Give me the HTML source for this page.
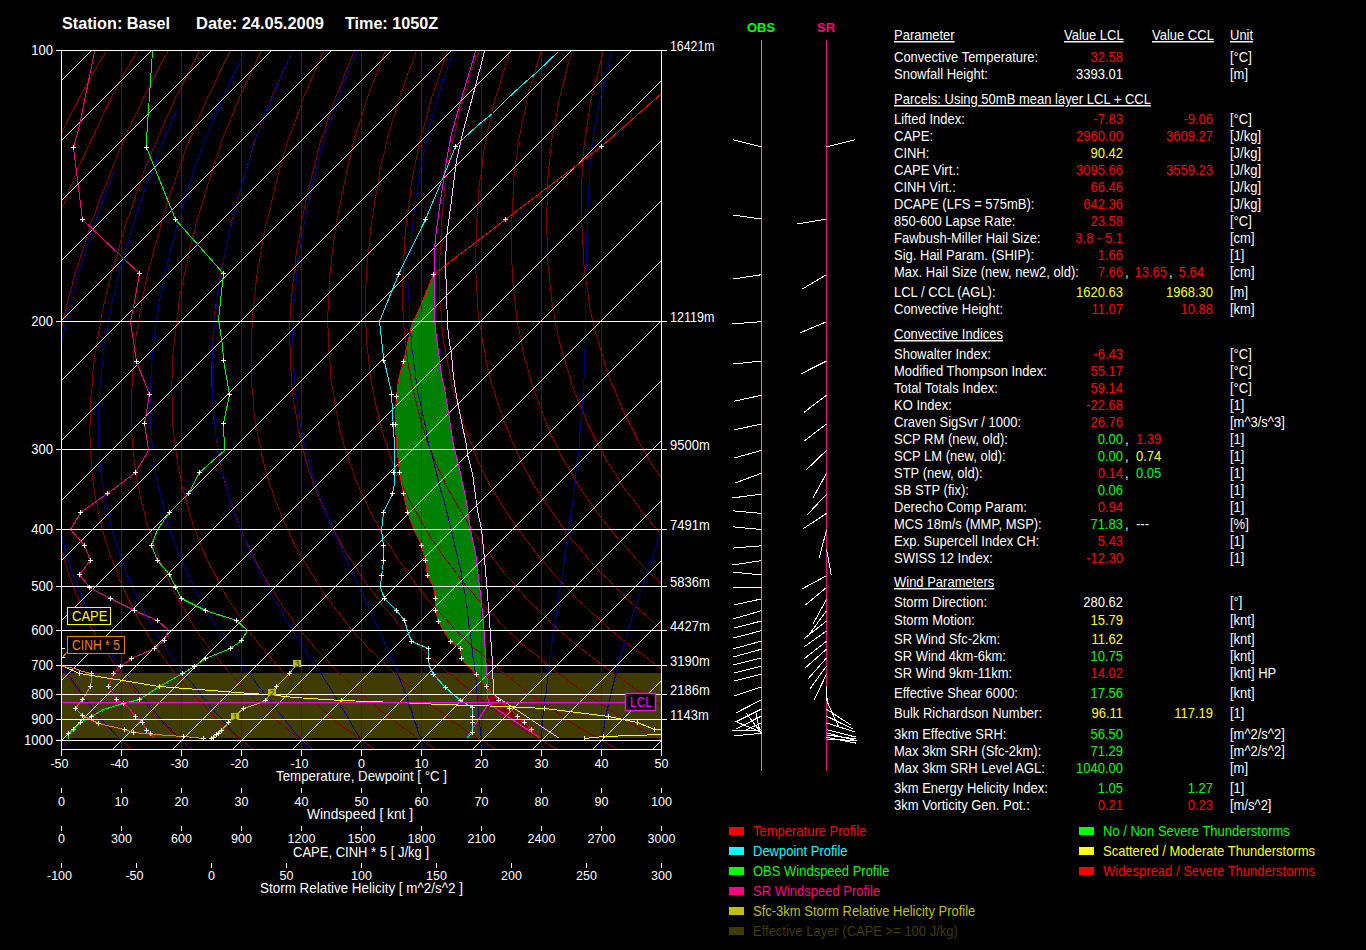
<!DOCTYPE html>
<html><head><meta charset="utf-8"><style>
html,body{margin:0;padding:0;background:#000;width:1366px;height:950px;overflow:hidden}
svg{display:block}
text{font-family:"Liberation Sans",sans-serif}
</style></head><body>
<svg width="1366" height="950" viewBox="0 0 1366 950">
<rect width="1366" height="950" fill="#000"/>
<defs><clipPath id="cp"><rect x="62" y="51" width="599" height="698"/></clipPath></defs>
<g clip-path="url(#cp)" shape-rendering="crispEdges">
<rect x="62" y="673" width="599" height="65" fill="#403c00"/>
<polygon points="433.5,274.5 416.5,315.5 412.5,321.5 407.5,343.5 403.9,361.5 399.0,379.5 396.2,396.5 395.3,412.5 395.3,424.5 396.2,445.5 398.3,461.5 399.8,472.5 403.9,493.5 407.5,512.5 415.0,530.9 421.3,545.5 425.4,560.5 427.5,575.5 433.1,586.4 435.9,598.5 435.9,610.5 438.0,621.1 443.5,630.9 450.5,641.5 460.9,648.5 461.6,658.0 467.9,665.6 476.9,674.0 486.6,686.5 492.5,693.5 487.5,693.5 487.3,685.1 485.9,655.9 483.2,621.1 480.4,593.3 477.6,570.5 476.2,558.7 470.6,529.5 465.1,496.1 458.1,464.1 453.9,445.5 449.1,419.8 446.3,400.3 443.5,383.6 441.4,376.7 438.7,351.7 435.9,329.4 434.8,315.5 434.8,278.9" fill="#008000" stroke="none"/>
<polygon points="492.5,693.5 498.0,700.2 509.5,709.0 517.3,716.2 524.5,722.8 531.1,729.5 540.5,738.5 540.5,738.5 488.0,703.5 487.5,693.5" fill="#800000" stroke="none"/>
<rect x="121" y="50" width="1" height="700" fill="#004000"/>
<rect x="181" y="50" width="1" height="700" fill="#004000"/>
<rect x="241" y="50" width="1" height="700" fill="#004000"/>
<rect x="301" y="50" width="1" height="700" fill="#004000"/>
<rect x="361" y="50" width="1" height="700" fill="#004000"/>
<rect x="421" y="50" width="1" height="700" fill="#004000"/>
<rect x="481" y="50" width="1" height="700" fill="#004000"/>
<rect x="541" y="50" width="1" height="700" fill="#004000"/>
<rect x="601" y="50" width="1" height="700" fill="#004000"/>
<polyline points="106.5,50.5 99.5,62.5 92.5,74.5 85.5,86.5 79.5,97.5 73.5,109.5 67.5,120.5 62.5,131.5 57.5,141.5 52.5,152.5 47.5,162.5 42.5,172.5 38.5,182.5 34.5,192.5 29.5,202.5 25.5,212.5 21.5,221.5 18.5,231.5 14.5,241.5 10.5,250.5 7.5,260.5 3.5,269.5 0.5,278.5 -2.5,288.5 -5.5,297.5 -8.5,306.5 -11.5,315.5 -13.5,323.5 -16.5,332.5 -18.5,341.5 -20.5,349.5 -22.5,358.5 -24.5,366.5 -26.5,375.5 -27.5,383.5 -29.5,391.5 -30.5,399.5 -32.5,407.5 -33.5,415.5 -34.5,423.5 -35.5,431.5 -36.5,439.5 -36.5,446.5 -37.5,454.5 -37.5,462.5 -38.5,469.5 -38.5,476.5 -38.5,484.5 -38.5,491.5 -38.5,498.5 -37.5,505.5 -37.5,512.5 -36.5,519.5 -36.5,526.5 -35.5,533.5 -34.5,540.5 -33.5,546.5 -32.5,553.5 -31.5,560.5 -29.5,566.5 -28.5,573.5 -26.5,579.5 -25.5,586.5 -23.5,592.5 -21.5,599.5 -19.5,605.5 -17.5,611.5 -15.5,617.5 -12.5,624.5 -10.5,630.5 -7.5,636.5 -5.5,642.5 -2.5,648.5 0.5,653.5 3.5,659.5 6.5,665.5 10.5,671.5 13.5,676.5 16.5,682.5 20.5,688.5 24.5,693.5 27.5,699.5 31.5,704.5 35.5,710.5 39.5,715.5 44.5,721.5 48.5,726.5 53.5,731.5 57.5,736.5 62.5,741.5 67.5,746.5 72.5,751.5" fill="none" stroke="#800000" stroke-width="1"/>
<polyline points="137.5,50.5 130.5,62.5 123.5,74.5 117.5,86.5 111.5,97.5 105.5,109.5 100.5,120.5 95.5,131.5 90.5,141.5 85.5,152.5 80.5,162.5 76.5,172.5 72.5,182.5 68.5,192.5 64.5,202.5 60.5,212.5 56.5,221.5 53.5,231.5 49.5,241.5 46.5,250.5 43.5,260.5 40.5,269.5 37.5,278.5 34.5,288.5 31.5,297.5 28.5,306.5 26.5,315.5 24.5,323.5 22.5,332.5 20.5,341.5 18.5,349.5 16.5,358.5 14.5,366.5 13.5,375.5 12.5,383.5 10.5,391.5 9.5,399.5 8.5,407.5 7.5,415.5 7.5,423.5 6.5,431.5 5.5,439.5 5.5,446.5 5.5,454.5 5.5,462.5 5.5,469.5 5.5,476.5 5.5,484.5 5.5,491.5 6.5,498.5 7.5,505.5 7.5,512.5 8.5,519.5 9.5,526.5 10.5,533.5 12.5,540.5 13.5,546.5 15.5,553.5 16.5,560.5 18.5,566.5 20.5,573.5 22.5,579.5 24.5,586.5 26.5,592.5 28.5,599.5 30.5,605.5 33.5,611.5 35.5,617.5 38.5,624.5 41.5,630.5 44.5,636.5 47.5,642.5 50.5,648.5 53.5,653.5 57.5,659.5 60.5,665.5 64.5,671.5 68.5,676.5 72.5,682.5 76.5,688.5 80.5,693.5 84.5,699.5 88.5,704.5 93.5,710.5 97.5,715.5 102.5,721.5 107.5,726.5 112.5,731.5 117.5,736.5 122.5,741.5 128.5,746.5 133.5,751.5" fill="none" stroke="#800000" stroke-width="1"/>
<polyline points="168.5,50.5 161.5,62.5 155.5,74.5 149.5,86.5 143.5,97.5 138.5,109.5 132.5,120.5 127.5,131.5 123.5,141.5 118.5,152.5 114.5,162.5 110.5,172.5 106.5,182.5 102.5,192.5 98.5,202.5 95.5,212.5 91.5,221.5 88.5,231.5 85.5,241.5 82.5,250.5 79.5,260.5 76.5,269.5 73.5,278.5 71.5,288.5 68.5,297.5 66.5,306.5 64.5,315.5 62.5,323.5 60.5,332.5 58.5,341.5 57.5,349.5 55.5,358.5 54.5,366.5 53.5,375.5 52.5,383.5 51.5,391.5 50.5,399.5 49.5,407.5 48.5,415.5 48.5,423.5 48.5,431.5 47.5,439.5 47.5,446.5 47.5,454.5 48.5,462.5 48.5,469.5 48.5,476.5 49.5,484.5 50.5,491.5 51.5,498.5 52.5,505.5 53.5,512.5 54.5,519.5 55.5,526.5 57.5,533.5 58.5,540.5 60.5,546.5 62.5,553.5 64.5,560.5 66.5,566.5 68.5,573.5 70.5,579.5 73.5,586.5 75.5,592.5 78.5,599.5 81.5,605.5 83.5,611.5 86.5,617.5 89.5,624.5 93.5,630.5 96.5,636.5 99.5,642.5 103.5,648.5 107.5,653.5 111.5,659.5 115.5,665.5 119.5,671.5 123.5,676.5 127.5,682.5 132.5,688.5 136.5,693.5 141.5,699.5 145.5,704.5 150.5,710.5 155.5,715.5 160.5,721.5 166.5,726.5 171.5,731.5 177.5,736.5 182.5,741.5 188.5,746.5 194.5,751.5" fill="none" stroke="#800000" stroke-width="1"/>
<polyline points="199.5,50.5 193.5,62.5 187.5,74.5 181.5,86.5 175.5,97.5 170.5,109.5 165.5,120.5 160.5,131.5 156.5,141.5 151.5,152.5 147.5,162.5 143.5,172.5 140.5,182.5 136.5,192.5 133.5,202.5 130.5,212.5 126.5,221.5 123.5,231.5 120.5,241.5 118.5,250.5 115.5,260.5 112.5,269.5 110.5,278.5 107.5,288.5 105.5,297.5 103.5,306.5 101.5,315.5 100.5,323.5 98.5,332.5 97.5,341.5 95.5,349.5 94.5,358.5 93.5,366.5 92.5,375.5 92.5,383.5 91.5,391.5 90.5,399.5 90.5,407.5 90.5,415.5 90.5,423.5 89.5,431.5 90.5,439.5 90.5,446.5 90.5,454.5 91.5,462.5 91.5,469.5 92.5,476.5 93.5,484.5 94.5,491.5 95.5,498.5 97.5,505.5 98.5,512.5 100.5,519.5 101.5,526.5 103.5,533.5 105.5,540.5 107.5,546.5 109.5,553.5 112.5,560.5 114.5,566.5 117.5,573.5 119.5,579.5 122.5,586.5 125.5,592.5 128.5,599.5 131.5,605.5 134.5,611.5 137.5,617.5 141.5,624.5 145.5,630.5 148.5,636.5 152.5,642.5 156.5,648.5 160.5,653.5 164.5,659.5 169.5,665.5 173.5,671.5 178.5,676.5 183.5,682.5 187.5,688.5 192.5,693.5 197.5,699.5 203.5,704.5 208.5,710.5 213.5,715.5 219.5,721.5 224.5,726.5 230.5,731.5 236.5,736.5 243.5,741.5 249.5,746.5 255.5,751.5" fill="none" stroke="#800000" stroke-width="1"/>
<polyline points="230.5,50.5 224.5,62.5 218.5,74.5 213.5,86.5 207.5,97.5 202.5,109.5 197.5,120.5 193.5,131.5 188.5,141.5 184.5,152.5 181.5,162.5 177.5,172.5 174.5,182.5 170.5,192.5 167.5,202.5 164.5,212.5 161.5,221.5 159.5,231.5 156.5,241.5 153.5,250.5 151.5,260.5 148.5,269.5 146.5,278.5 144.5,288.5 142.5,297.5 141.5,306.5 139.5,315.5 138.5,323.5 136.5,332.5 135.5,341.5 134.5,349.5 133.5,358.5 133.5,366.5 132.5,375.5 132.5,383.5 131.5,391.5 131.5,399.5 131.5,407.5 131.5,415.5 131.5,423.5 131.5,431.5 132.5,439.5 132.5,446.5 133.5,454.5 134.5,462.5 135.5,469.5 136.5,476.5 137.5,484.5 139.5,491.5 140.5,498.5 142.5,505.5 144.5,512.5 145.5,519.5 147.5,526.5 150.5,533.5 152.5,540.5 154.5,546.5 157.5,553.5 159.5,560.5 162.5,566.5 165.5,573.5 168.5,579.5 171.5,586.5 174.5,592.5 178.5,599.5 181.5,605.5 185.5,611.5 189.5,617.5 192.5,624.5 196.5,630.5 200.5,636.5 205.5,642.5 209.5,648.5 214.5,653.5 218.5,659.5 223.5,665.5 228.5,671.5 233.5,676.5 238.5,682.5 243.5,688.5 249.5,693.5 254.5,699.5 260.5,704.5 265.5,710.5 271.5,715.5 277.5,721.5 283.5,726.5 290.5,731.5 296.5,736.5 303.5,741.5 309.5,746.5 316.5,751.5" fill="none" stroke="#800000" stroke-width="1"/>
<polyline points="261.5,50.5 255.5,62.5 250.5,74.5 244.5,86.5 239.5,97.5 234.5,109.5 230.5,120.5 225.5,131.5 221.5,141.5 218.5,152.5 214.5,162.5 211.5,172.5 208.5,182.5 205.5,192.5 202.5,202.5 199.5,212.5 196.5,221.5 194.5,231.5 191.5,241.5 189.5,250.5 187.5,260.5 185.5,269.5 183.5,278.5 181.5,288.5 179.5,297.5 178.5,306.5 177.5,315.5 176.5,323.5 175.5,332.5 174.5,341.5 173.5,349.5 172.5,358.5 172.5,366.5 172.5,375.5 171.5,383.5 171.5,391.5 172.5,399.5 172.5,407.5 172.5,415.5 172.5,423.5 173.5,431.5 174.5,439.5 175.5,446.5 176.5,454.5 177.5,462.5 178.5,469.5 180.5,476.5 181.5,484.5 183.5,491.5 185.5,498.5 187.5,505.5 189.5,512.5 191.5,519.5 193.5,526.5 196.5,533.5 199.5,540.5 201.5,546.5 204.5,553.5 207.5,560.5 210.5,566.5 214.5,573.5 217.5,579.5 220.5,586.5 224.5,592.5 228.5,599.5 232.5,605.5 236.5,611.5 240.5,617.5 244.5,624.5 248.5,630.5 253.5,636.5 257.5,642.5 262.5,648.5 267.5,653.5 272.5,659.5 277.5,665.5 282.5,671.5 288.5,676.5 293.5,682.5 299.5,688.5 305.5,693.5 311.5,699.5 317.5,704.5 323.5,710.5 329.5,715.5 335.5,721.5 342.5,726.5 349.5,731.5 356.5,736.5 363.5,741.5 370.5,746.5 377.5,751.5" fill="none" stroke="#800000" stroke-width="1"/>
<polyline points="292.5,50.5 287.5,62.5 281.5,74.5 276.5,86.5 271.5,97.5 267.5,109.5 262.5,120.5 258.5,131.5 254.5,141.5 251.5,152.5 248.5,162.5 245.5,172.5 242.5,182.5 239.5,192.5 236.5,202.5 234.5,212.5 231.5,221.5 229.5,231.5 227.5,241.5 225.5,250.5 223.5,260.5 221.5,269.5 219.5,278.5 218.5,288.5 217.5,297.5 215.5,306.5 214.5,315.5 214.5,323.5 213.5,332.5 212.5,341.5 212.5,349.5 212.5,358.5 211.5,366.5 211.5,375.5 211.5,383.5 212.5,391.5 212.5,399.5 213.5,407.5 213.5,415.5 214.5,423.5 215.5,431.5 216.5,439.5 217.5,446.5 218.5,454.5 220.5,462.5 221.5,469.5 223.5,476.5 225.5,484.5 227.5,491.5 229.5,498.5 232.5,505.5 234.5,512.5 237.5,519.5 239.5,526.5 242.5,533.5 245.5,540.5 248.5,546.5 252.5,553.5 255.5,560.5 258.5,566.5 262.5,573.5 266.5,579.5 270.5,586.5 274.5,592.5 278.5,599.5 282.5,605.5 286.5,611.5 291.5,617.5 295.5,624.5 300.5,630.5 305.5,636.5 310.5,642.5 315.5,648.5 320.5,653.5 326.5,659.5 331.5,665.5 337.5,671.5 343.5,676.5 349.5,682.5 355.5,688.5 361.5,693.5 367.5,699.5 374.5,704.5 380.5,710.5 387.5,715.5 394.5,721.5 401.5,726.5 408.5,731.5 415.5,736.5 423.5,741.5 431.5,746.5 438.5,751.5" fill="none" stroke="#800000" stroke-width="1"/>
<polyline points="323.5,50.5 318.5,62.5 313.5,74.5 308.5,86.5 303.5,97.5 299.5,109.5 295.5,120.5 291.5,131.5 287.5,141.5 284.5,152.5 281.5,162.5 278.5,172.5 276.5,182.5 273.5,192.5 271.5,202.5 269.5,212.5 266.5,221.5 264.5,231.5 262.5,241.5 261.5,250.5 259.5,260.5 257.5,269.5 256.5,278.5 255.5,288.5 254.5,297.5 253.5,306.5 252.5,315.5 252.5,323.5 251.5,332.5 251.5,341.5 251.5,349.5 251.5,358.5 251.5,366.5 251.5,375.5 251.5,383.5 252.5,391.5 253.5,399.5 253.5,407.5 254.5,415.5 255.5,423.5 257.5,431.5 258.5,439.5 260.5,446.5 261.5,454.5 263.5,462.5 265.5,469.5 267.5,476.5 269.5,484.5 272.5,491.5 274.5,498.5 277.5,505.5 280.5,512.5 282.5,519.5 286.5,526.5 289.5,533.5 292.5,540.5 295.5,546.5 299.5,553.5 303.5,560.5 307.5,566.5 311.5,573.5 315.5,579.5 319.5,586.5 323.5,592.5 328.5,599.5 332.5,605.5 337.5,611.5 342.5,617.5 347.5,624.5 352.5,630.5 357.5,636.5 363.5,642.5 368.5,648.5 374.5,653.5 380.5,659.5 386.5,665.5 392.5,671.5 398.5,676.5 404.5,682.5 411.5,688.5 417.5,693.5 424.5,699.5 431.5,704.5 438.5,710.5 445.5,715.5 452.5,721.5 460.5,726.5 467.5,731.5 475.5,736.5 483.5,741.5 491.5,746.5 499.5,751.5" fill="none" stroke="#800000" stroke-width="1"/>
<polyline points="354.5,50.5 349.5,62.5 344.5,74.5 340.5,86.5 335.5,97.5 331.5,109.5 327.5,120.5 324.5,131.5 320.5,141.5 317.5,152.5 315.5,162.5 312.5,172.5 310.5,182.5 307.5,192.5 305.5,202.5 303.5,212.5 301.5,221.5 300.5,231.5 298.5,241.5 296.5,250.5 295.5,260.5 294.5,269.5 293.5,278.5 292.5,288.5 291.5,297.5 290.5,306.5 290.5,315.5 289.5,323.5 289.5,332.5 289.5,341.5 290.5,349.5 290.5,358.5 290.5,366.5 291.5,375.5 291.5,383.5 292.5,391.5 293.5,399.5 294.5,407.5 296.5,415.5 297.5,423.5 298.5,431.5 300.5,439.5 302.5,446.5 304.5,454.5 306.5,462.5 308.5,469.5 311.5,476.5 313.5,484.5 316.5,491.5 319.5,498.5 322.5,505.5 325.5,512.5 328.5,519.5 332.5,526.5 335.5,533.5 339.5,540.5 342.5,546.5 346.5,553.5 351.5,560.5 355.5,566.5 359.5,573.5 363.5,579.5 368.5,586.5 373.5,592.5 378.5,599.5 382.5,605.5 388.5,611.5 393.5,617.5 398.5,624.5 404.5,630.5 409.5,636.5 415.5,642.5 421.5,648.5 427.5,653.5 433.5,659.5 440.5,665.5 446.5,671.5 453.5,676.5 460.5,682.5 467.5,688.5 474.5,693.5 481.5,699.5 488.5,704.5 495.5,710.5 503.5,715.5 510.5,721.5 518.5,726.5 526.5,731.5 535.5,736.5 543.5,741.5 552.5,746.5 560.5,751.5" fill="none" stroke="#800000" stroke-width="1"/>
<polyline points="385.5,50.5 380.5,62.5 376.5,74.5 371.5,86.5 367.5,97.5 363.5,109.5 360.5,120.5 356.5,131.5 353.5,141.5 351.5,152.5 348.5,162.5 346.5,172.5 344.5,182.5 342.5,192.5 340.5,202.5 338.5,212.5 336.5,221.5 335.5,231.5 333.5,241.5 332.5,250.5 331.5,260.5 330.5,269.5 329.5,278.5 329.5,288.5 328.5,297.5 328.5,306.5 327.5,315.5 327.5,323.5 328.5,332.5 328.5,341.5 328.5,349.5 329.5,358.5 330.5,366.5 330.5,375.5 331.5,383.5 333.5,391.5 334.5,399.5 335.5,407.5 337.5,415.5 338.5,423.5 340.5,431.5 342.5,439.5 344.5,446.5 347.5,454.5 349.5,462.5 352.5,469.5 354.5,476.5 357.5,484.5 360.5,491.5 364.5,498.5 367.5,505.5 370.5,512.5 374.5,519.5 378.5,526.5 381.5,533.5 385.5,540.5 390.5,546.5 394.5,553.5 398.5,560.5 403.5,566.5 408.5,573.5 412.5,579.5 417.5,586.5 422.5,592.5 427.5,599.5 433.5,605.5 438.5,611.5 444.5,617.5 450.5,624.5 455.5,630.5 462.5,636.5 468.5,642.5 474.5,648.5 481.5,653.5 487.5,659.5 494.5,665.5 501.5,671.5 508.5,676.5 515.5,682.5 522.5,688.5 530.5,693.5 537.5,699.5 545.5,704.5 553.5,710.5 561.5,715.5 569.5,721.5 577.5,726.5 586.5,731.5 594.5,736.5 603.5,741.5 612.5,746.5 621.5,751.5" fill="none" stroke="#800000" stroke-width="1"/>
<polyline points="416.5,50.5 412.5,62.5 407.5,74.5 403.5,86.5 399.5,97.5 396.5,109.5 392.5,120.5 389.5,131.5 386.5,141.5 384.5,152.5 381.5,162.5 379.5,172.5 378.5,182.5 376.5,192.5 374.5,202.5 373.5,212.5 371.5,221.5 370.5,231.5 369.5,241.5 368.5,250.5 367.5,260.5 366.5,269.5 366.5,278.5 365.5,288.5 365.5,297.5 365.5,306.5 365.5,315.5 365.5,323.5 366.5,332.5 366.5,341.5 367.5,349.5 368.5,358.5 369.5,366.5 370.5,375.5 371.5,383.5 373.5,391.5 374.5,399.5 376.5,407.5 378.5,415.5 380.5,423.5 382.5,431.5 384.5,439.5 387.5,446.5 389.5,454.5 392.5,462.5 395.5,469.5 398.5,476.5 401.5,484.5 405.5,491.5 408.5,498.5 412.5,505.5 416.5,512.5 420.5,519.5 424.5,526.5 428.5,533.5 432.5,540.5 437.5,546.5 441.5,553.5 446.5,560.5 451.5,566.5 456.5,573.5 461.5,579.5 466.5,586.5 472.5,592.5 477.5,599.5 483.5,605.5 489.5,611.5 495.5,617.5 501.5,624.5 507.5,630.5 514.5,636.5 520.5,642.5 527.5,648.5 534.5,653.5 541.5,659.5 548.5,665.5 555.5,671.5 563.5,676.5 570.5,682.5 578.5,688.5 586.5,693.5 594.5,699.5 602.5,704.5 610.5,710.5 619.5,715.5 627.5,721.5 636.5,726.5 645.5,731.5 654.5,736.5 663.5,741.5 673.5,746.5 682.5,751.5" fill="none" stroke="#800000" stroke-width="1"/>
<polyline points="447.5,50.5 443.5,62.5 439.5,74.5 435.5,86.5 431.5,97.5 428.5,109.5 425.5,120.5 422.5,131.5 419.5,141.5 417.5,152.5 415.5,162.5 413.5,172.5 411.5,182.5 410.5,192.5 409.5,202.5 407.5,212.5 406.5,221.5 405.5,231.5 404.5,241.5 404.5,250.5 403.5,260.5 403.5,269.5 402.5,278.5 402.5,288.5 402.5,297.5 402.5,306.5 403.5,315.5 403.5,323.5 404.5,332.5 405.5,341.5 406.5,349.5 407.5,358.5 408.5,366.5 410.5,375.5 411.5,383.5 413.5,391.5 415.5,399.5 417.5,407.5 419.5,415.5 421.5,423.5 424.5,431.5 426.5,439.5 429.5,446.5 432.5,454.5 435.5,462.5 438.5,469.5 442.5,476.5 445.5,484.5 449.5,491.5 453.5,498.5 457.5,505.5 461.5,512.5 465.5,519.5 470.5,526.5 474.5,533.5 479.5,540.5 484.5,546.5 489.5,553.5 494.5,560.5 499.5,566.5 504.5,573.5 510.5,579.5 516.5,586.5 521.5,592.5 527.5,599.5 533.5,605.5 540.5,611.5 546.5,617.5 552.5,624.5 559.5,630.5 566.5,636.5 573.5,642.5 580.5,648.5 587.5,653.5 595.5,659.5 602.5,665.5 610.5,671.5 618.5,676.5 626.5,682.5 634.5,688.5 642.5,693.5 651.5,699.5 659.5,704.5 668.5,710.5 677.5,715.5 686.5,721.5 695.5,726.5 704.5,731.5 714.5,736.5 723.5,741.5 733.5,746.5 743.5,751.5" fill="none" stroke="#800000" stroke-width="1"/>
<polyline points="479.5,50.5 474.5,62.5 470.5,74.5 467.5,86.5 463.5,97.5 460.5,109.5 457.5,120.5 455.5,131.5 452.5,141.5 450.5,152.5 448.5,162.5 447.5,172.5 445.5,182.5 444.5,192.5 443.5,202.5 442.5,212.5 441.5,221.5 441.5,231.5 440.5,241.5 440.5,250.5 439.5,260.5 439.5,269.5 439.5,278.5 439.5,288.5 439.5,297.5 440.5,306.5 441.5,315.5 441.5,323.5 442.5,332.5 443.5,341.5 445.5,349.5 446.5,358.5 448.5,366.5 450.5,375.5 451.5,383.5 453.5,391.5 456.5,399.5 458.5,407.5 460.5,415.5 463.5,423.5 466.5,431.5 469.5,439.5 472.5,446.5 475.5,454.5 478.5,462.5 482.5,469.5 485.5,476.5 489.5,484.5 493.5,491.5 498.5,498.5 502.5,505.5 506.5,512.5 511.5,519.5 516.5,526.5 521.5,533.5 526.5,540.5 531.5,546.5 536.5,553.5 542.5,560.5 547.5,566.5 553.5,573.5 559.5,579.5 565.5,586.5 571.5,592.5 577.5,599.5 584.5,605.5 590.5,611.5 597.5,617.5 604.5,624.5 611.5,630.5 618.5,636.5 626.5,642.5 633.5,648.5 641.5,653.5 649.5,659.5 656.5,665.5 665.5,671.5 673.5,676.5 681.5,682.5 690.5,688.5 699.5,693.5 707.5,699.5 716.5,704.5 725.5,710.5 734.5,715.5 744.5,721.5 753.5,726.5 763.5,731.5 773.5,736.5 784.5,741.5 794.5,746.5 804.5,751.5" fill="none" stroke="#800000" stroke-width="1"/>
<polyline points="510.5,50.5 506.5,62.5 502.5,74.5 499.5,86.5 495.5,97.5 492.5,109.5 490.5,120.5 487.5,131.5 485.5,141.5 483.5,152.5 482.5,162.5 481.5,172.5 479.5,182.5 478.5,192.5 478.5,202.5 477.5,212.5 476.5,221.5 476.5,231.5 476.5,241.5 475.5,250.5 475.5,260.5 475.5,269.5 476.5,278.5 476.5,288.5 477.5,297.5 477.5,306.5 478.5,315.5 479.5,323.5 481.5,332.5 482.5,341.5 484.5,349.5 485.5,358.5 487.5,366.5 489.5,375.5 491.5,383.5 494.5,391.5 496.5,399.5 499.5,407.5 502.5,415.5 504.5,423.5 508.5,431.5 511.5,439.5 514.5,446.5 518.5,454.5 521.5,462.5 525.5,469.5 529.5,476.5 533.5,484.5 538.5,491.5 542.5,498.5 547.5,505.5 552.5,512.5 557.5,519.5 562.5,526.5 567.5,533.5 572.5,540.5 578.5,546.5 584.5,553.5 589.5,560.5 595.5,566.5 601.5,573.5 608.5,579.5 614.5,586.5 621.5,592.5 627.5,599.5 634.5,605.5 641.5,611.5 648.5,617.5 655.5,624.5 663.5,630.5 670.5,636.5 678.5,642.5 686.5,648.5 694.5,653.5 702.5,659.5 711.5,665.5 719.5,671.5 728.5,676.5 737.5,682.5 746.5,688.5 755.5,693.5 764.5,699.5 773.5,704.5 783.5,710.5 792.5,715.5 802.5,721.5 812.5,726.5 823.5,731.5 833.5,736.5 844.5,741.5 854.5,746.5 866.5,751.5" fill="none" stroke="#800000" stroke-width="1"/>
<polyline points="541.5,50.5 537.5,62.5 534.5,74.5 530.5,86.5 527.5,97.5 525.5,109.5 522.5,120.5 520.5,131.5 518.5,141.5 517.5,152.5 515.5,162.5 514.5,172.5 513.5,182.5 513.5,192.5 512.5,202.5 512.5,212.5 511.5,221.5 511.5,231.5 511.5,241.5 511.5,250.5 511.5,260.5 512.5,269.5 512.5,278.5 513.5,288.5 514.5,297.5 515.5,306.5 516.5,315.5 517.5,323.5 519.5,332.5 521.5,341.5 522.5,349.5 524.5,358.5 527.5,366.5 529.5,375.5 531.5,383.5 534.5,391.5 537.5,399.5 540.5,407.5 543.5,415.5 546.5,423.5 549.5,431.5 553.5,439.5 557.5,446.5 560.5,454.5 564.5,462.5 569.5,469.5 573.5,476.5 577.5,484.5 582.5,491.5 587.5,498.5 592.5,505.5 597.5,512.5 602.5,519.5 608.5,526.5 613.5,533.5 619.5,540.5 625.5,546.5 631.5,553.5 637.5,560.5 643.5,566.5 650.5,573.5 657.5,579.5 663.5,586.5 670.5,592.5 677.5,599.5 684.5,605.5 692.5,611.5 699.5,617.5 707.5,624.5 715.5,630.5 723.5,636.5 731.5,642.5 739.5,648.5 747.5,653.5 756.5,659.5 765.5,665.5 774.5,671.5 783.5,676.5 792.5,682.5 801.5,688.5 811.5,693.5 821.5,699.5 830.5,704.5 840.5,710.5 850.5,715.5 861.5,721.5 871.5,726.5 882.5,731.5 893.5,736.5 904.5,741.5 915.5,746.5 927.5,751.5" fill="none" stroke="#800000" stroke-width="1"/>
<polyline points="572.5,50.5 568.5,62.5 565.5,74.5 562.5,86.5 559.5,97.5 557.5,109.5 555.5,120.5 553.5,131.5 551.5,141.5 550.5,152.5 549.5,162.5 548.5,172.5 547.5,182.5 547.5,192.5 547.5,202.5 546.5,212.5 546.5,221.5 546.5,231.5 547.5,241.5 547.5,250.5 547.5,260.5 548.5,269.5 549.5,278.5 550.5,288.5 551.5,297.5 552.5,306.5 554.5,315.5 555.5,323.5 557.5,332.5 559.5,341.5 561.5,349.5 564.5,358.5 566.5,366.5 569.5,375.5 571.5,383.5 574.5,391.5 577.5,399.5 581.5,407.5 584.5,415.5 587.5,423.5 591.5,431.5 595.5,439.5 599.5,446.5 603.5,454.5 607.5,462.5 612.5,469.5 617.5,476.5 621.5,484.5 626.5,491.5 632.5,498.5 637.5,505.5 642.5,512.5 648.5,519.5 654.5,526.5 660.5,533.5 666.5,540.5 672.5,546.5 678.5,553.5 685.5,560.5 692.5,566.5 698.5,573.5 705.5,579.5 713.5,586.5 720.5,592.5 727.5,599.5 735.5,605.5 742.5,611.5 750.5,617.5 758.5,624.5 766.5,630.5 775.5,636.5 783.5,642.5 792.5,648.5 801.5,653.5 810.5,659.5 819.5,665.5 828.5,671.5 838.5,676.5 847.5,682.5 857.5,688.5 867.5,693.5 877.5,699.5 887.5,704.5 898.5,710.5 908.5,715.5 919.5,721.5 930.5,726.5 941.5,731.5 952.5,736.5 964.5,741.5 976.5,746.5 988.5,751.5" fill="none" stroke="#800000" stroke-width="1"/>
<polyline points="603.5,50.5 600.5,62.5 597.5,74.5 594.5,86.5 591.5,97.5 589.5,109.5 587.5,120.5 586.5,131.5 584.5,141.5 583.5,152.5 582.5,162.5 582.5,172.5 581.5,182.5 581.5,192.5 581.5,202.5 581.5,212.5 581.5,221.5 582.5,231.5 582.5,241.5 583.5,250.5 583.5,260.5 584.5,269.5 585.5,278.5 587.5,288.5 588.5,297.5 589.5,306.5 591.5,315.5 593.5,323.5 595.5,332.5 598.5,341.5 600.5,349.5 603.5,358.5 605.5,366.5 608.5,375.5 611.5,383.5 615.5,391.5 618.5,399.5 621.5,407.5 625.5,415.5 629.5,423.5 633.5,431.5 637.5,439.5 641.5,446.5 646.5,454.5 650.5,462.5 655.5,469.5 660.5,476.5 665.5,484.5 671.5,491.5 676.5,498.5 682.5,505.5 688.5,512.5 694.5,519.5 700.5,526.5 706.5,533.5 712.5,540.5 719.5,546.5 726.5,553.5 733.5,560.5 740.5,566.5 747.5,573.5 754.5,579.5 762.5,586.5 769.5,592.5 777.5,599.5 785.5,605.5 793.5,611.5 801.5,617.5 810.5,624.5 818.5,630.5 827.5,636.5 836.5,642.5 845.5,648.5 854.5,653.5 864.5,659.5 873.5,665.5 883.5,671.5 893.5,676.5 903.5,682.5 913.5,688.5 923.5,693.5 934.5,699.5 944.5,704.5 955.5,710.5 966.5,715.5 977.5,721.5 989.5,726.5 1000.5,731.5 1012.5,736.5 1024.5,741.5 1036.5,746.5 1049.5,751.5" fill="none" stroke="#800000" stroke-width="1"/>
<polyline points="72.5,751.5 70.5,749.5 67.5,746.5 64.5,744.5 62.5,741.5 59.5,738.5 57.5,736.5 55.5,733.5 52.5,730.5 50.5,728.5 47.5,725.5 45.5,722.5 43.5,719.5 41.5,716.5 38.5,713.5 36.5,710.5 34.5,708.5 32.5,704.5 30.5,701.5 28.5,698.5 26.5,695.5 24.5,692.5 22.5,689.5 20.5,686.5 18.5,683.5 16.5,680.5 14.5,677.5 12.5,673.5 10.5,670.5 8.5,667.5 6.5,664.5 4.5,660.5 3.5,657.5 1.5,654.5 -0.5,650.5 -2.5,647.5 -3.5,643.5 -5.5,640.5 -6.5,636.5 -8.5,633.5 -10.5,629.5 -11.5,625.5 -12.5,622.5 -14.5,618.5 -15.5,614.5 -17.5,610.5 -18.5,606.5 -19.5,602.5 -20.5,598.5 -22.5,594.5 -23.5,590.5 -24.5,586.5 -25.5,582.5 -26.5,578.5 -27.5,574.5 -28.5,570.5 -29.5,565.5 -30.5,561.5 -30.5,557.5 -31.5,553.5 -32.5,548.5 -33.5,544.5 -33.5,539.5 -34.5,535.5 -35.5,530.5 -35.5,525.5 -35.5,521.5 -36.5,516.5 -36.5,511.5 -37.5,506.5 -37.5,501.5 -37.5,496.5 -37.5,491.5 -37.5,486.5 -37.5,480.5 -37.5,475.5 -37.5,470.5 -37.5,465.5 -37.5,460.5 -36.5,455.5 -36.5,450.5 -36.5,445.5 -35.5,440.5 -35.5,435.5 -34.5,431.5 -34.5,426.5 -33.5,421.5 -32.5,416.5 -32.5,412.5 -31.5,407.5 -30.5,402.5 -29.5,397.5 -29.5,393.5 -28.5,389.5 -27.5,384.5 -26.5,379.5 -25.5,375.5 -24.5,370.5 -23.5,366.5 -22.5,361.5 -21.5,357.5 -20.5,353.5 -19.5,348.5 -18.5,344.5 -17.5,339.5 -15.5,334.5 -14.5,330.5 -13.5,326.5 -12.5,322.5 -11.5,318.5 -10.5,313.5 -8.5,309.5 -7.5,304.5 -5.5,300.5 -4.5,295.5 -3.5,291.5 -1.5,287.5" fill="none" stroke="#000080" stroke-width="1"/>
<polyline points="133.5,751.5 130.5,749.5 127.5,746.5 125.5,744.5 122.5,741.5 120.5,739.5 117.5,736.5 115.5,734.5 112.5,731.5 110.5,728.5 107.5,726.5 105.5,723.5 102.5,720.5 100.5,718.5 98.5,715.5 95.5,712.5 93.5,709.5 91.5,706.5 89.5,703.5 86.5,700.5 84.5,697.5 82.5,694.5 80.5,691.5 78.5,688.5 76.5,686.5 74.5,683.5 72.5,680.5 69.5,676.5 67.5,673.5 65.5,670.5 63.5,667.5 61.5,664.5 59.5,661.5 57.5,658.5 56.5,654.5 54.5,651.5 52.5,648.5 50.5,645.5 48.5,641.5 47.5,638.5 45.5,634.5 43.5,631.5 41.5,627.5 40.5,624.5 38.5,620.5 37.5,617.5 35.5,613.5 34.5,610.5 32.5,606.5 31.5,602.5 29.5,598.5 28.5,594.5 27.5,591.5 26.5,587.5 24.5,583.5 23.5,579.5 22.5,575.5 21.5,571.5 20.5,567.5 18.5,563.5 17.5,558.5 16.5,554.5 15.5,550.5 15.5,546.5 14.5,542.5 13.5,537.5 12.5,533.5 11.5,528.5 11.5,524.5 10.5,519.5 9.5,515.5 9.5,510.5 8.5,505.5 8.5,500.5 7.5,496.5 7.5,491.5 7.5,486.5 7.5,481.5 6.5,476.5 6.5,471.5 6.5,465.5 6.5,460.5 6.5,455.5 6.5,450.5 7.5,445.5 7.5,440.5 7.5,435.5 7.5,430.5 8.5,425.5 8.5,420.5 9.5,415.5 9.5,411.5 10.5,406.5 10.5,401.5 11.5,396.5 12.5,391.5 12.5,387.5 13.5,382.5 14.5,377.5 15.5,373.5 16.5,368.5 16.5,364.5 17.5,359.5 18.5,355.5 19.5,350.5 20.5,346.5 21.5,341.5 22.5,337.5 23.5,332.5 24.5,328.5 25.5,324.5 26.5,319.5 27.5,315.5 29.5,311.5 30.5,306.5 31.5,302.5 32.5,297.5 34.5,292.5 35.5,288.5 36.5,285.5 37.5,281.5 39.5,277.5 40.5,272.5 41.5,268.5 43.5,264.5 44.5,260.5 46.5,255.5 47.5,251.5 49.5,246.5 50.5,242.5 52.5,237.5 54.5,233.5 54.5,231.5" fill="none" stroke="#000080" stroke-width="1"/>
<polyline points="193.5,751.5 190.5,749.5 188.5,746.5 185.5,744.5 182.5,741.5 180.5,739.5 177.5,736.5 175.5,734.5 172.5,731.5 170.5,728.5 167.5,726.5 165.5,723.5 162.5,721.5 160.5,718.5 157.5,715.5 155.5,712.5 153.5,710.5 150.5,707.5 148.5,704.5 146.5,701.5 143.5,698.5 141.5,695.5 139.5,693.5 137.5,690.5 134.5,687.5 132.5,684.5 130.5,681.5 128.5,678.5 126.5,675.5 123.5,672.5 121.5,669.5 119.5,666.5 117.5,663.5 115.5,660.5 113.5,657.5 111.5,654.5 109.5,651.5 107.5,648.5 105.5,644.5 103.5,641.5 101.5,638.5 99.5,634.5 98.5,631.5 96.5,628.5 94.5,624.5 92.5,621.5 91.5,617.5 89.5,614.5 87.5,611.5 86.5,607.5 84.5,604.5 83.5,600.5 81.5,596.5 80.5,593.5 78.5,589.5 77.5,585.5 75.5,581.5 74.5,578.5 72.5,574.5 71.5,570.5 70.5,566.5 69.5,562.5 67.5,558.5 66.5,554.5 65.5,550.5 64.5,546.5 63.5,542.5 62.5,538.5 61.5,534.5 60.5,529.5 59.5,525.5 58.5,521.5 57.5,516.5 57.5,512.5 56.5,507.5 55.5,503.5 55.5,498.5 54.5,494.5 53.5,489.5 53.5,484.5 52.5,479.5 52.5,475.5 52.5,470.5 51.5,465.5 51.5,460.5 51.5,455.5 51.5,449.5 51.5,444.5 51.5,439.5 51.5,434.5 51.5,428.5 52.5,424.5 52.5,419.5 52.5,413.5 53.5,408.5 53.5,403.5 53.5,399.5 54.5,394.5 54.5,389.5 55.5,384.5 55.5,379.5 56.5,375.5 57.5,370.5 57.5,365.5 58.5,360.5 59.5,356.5 60.5,351.5 61.5,347.5 61.5,342.5 62.5,337.5 63.5,333.5 64.5,328.5 65.5,324.5 66.5,319.5 67.5,315.5 68.5,311.5 69.5,306.5 70.5,302.5 71.5,297.5 73.5,292.5 74.5,287.5 75.5,284.5 76.5,280.5 77.5,275.5 78.5,271.5 80.5,267.5 81.5,263.5 82.5,259.5 84.5,254.5 85.5,250.5 87.5,245.5 88.5,241.5 90.5,236.5 91.5,231.5 93.5,226.5 95.5,222.5 96.5,218.5 97.5,214.5 99.5,210.5 100.5,206.5 101.5,203.5 103.5,199.5 104.5,195.5 106.5,191.5 107.5,186.5 109.5,182.5 111.5,178.5 112.5,174.5 113.5,172.5" fill="none" stroke="#000080" stroke-width="1"/>
<polyline points="252.5,751.5 250.5,749.5 247.5,746.5 245.5,744.5 242.5,741.5 239.5,738.5 237.5,736.5 234.5,733.5 232.5,731.5 229.5,728.5 227.5,725.5 225.5,723.5 222.5,720.5 220.5,717.5 217.5,714.5 215.5,712.5 213.5,709.5 210.5,706.5 208.5,703.5 206.5,700.5 203.5,698.5 201.5,695.5 199.5,692.5 197.5,689.5 194.5,686.5 192.5,683.5 190.5,681.5 187.5,678.5 185.5,675.5 183.5,672.5 181.5,669.5 179.5,666.5 176.5,663.5 174.5,660.5 172.5,657.5 170.5,654.5 168.5,651.5 166.5,648.5 164.5,645.5 162.5,642.5 160.5,639.5 158.5,635.5 156.5,632.5 154.5,629.5 152.5,626.5 150.5,622.5 148.5,619.5 146.5,616.5 145.5,612.5 143.5,609.5 141.5,606.5 139.5,602.5 138.5,599.5 136.5,595.5 134.5,592.5 133.5,588.5 131.5,584.5 130.5,581.5 128.5,577.5 126.5,573.5 125.5,570.5 124.5,566.5 122.5,562.5 121.5,558.5 119.5,555.5 118.5,551.5 117.5,547.5 116.5,543.5 114.5,539.5 113.5,535.5 112.5,531.5 111.5,527.5 110.5,523.5 109.5,518.5 108.5,514.5 107.5,510.5 106.5,506.5 105.5,501.5 104.5,497.5 103.5,492.5 103.5,488.5 102.5,484.5 101.5,479.5 101.5,474.5 100.5,470.5 100.5,465.5 99.5,460.5 99.5,455.5 99.5,450.5 98.5,445.5 98.5,440.5 98.5,435.5 98.5,430.5 98.5,424.5 98.5,419.5 98.5,414.5 98.5,409.5 98.5,403.5 99.5,399.5 99.5,394.5 99.5,389.5 100.5,383.5 100.5,379.5 101.5,374.5 101.5,369.5 102.5,364.5 102.5,359.5 103.5,354.5 103.5,350.5 104.5,345.5 105.5,340.5 105.5,336.5 106.5,331.5 107.5,326.5 108.5,321.5 109.5,317.5 110.5,312.5 111.5,308.5 111.5,303.5 112.5,299.5 114.5,294.5 115.5,289.5 116.5,285.5 117.5,280.5 118.5,275.5 119.5,271.5 120.5,267.5 121.5,263.5 123.5,259.5 124.5,254.5 125.5,250.5 126.5,245.5 128.5,241.5 129.5,236.5 131.5,231.5 132.5,226.5 134.5,222.5 135.5,217.5 137.5,213.5 138.5,209.5 139.5,205.5 140.5,201.5 142.5,197.5 143.5,193.5 144.5,189.5 146.5,185.5 147.5,181.5 149.5,177.5 150.5,172.5 152.5,168.5 154.5,163.5 156.5,159.5 157.5,154.5 159.5,149.5 161.5,144.5 163.5,140.5 165.5,134.5 168.5,129.5 169.5,126.5 171.5,122.5 172.5,119.5 174.5,115.5 176.5,111.5 176.5,109.5" fill="none" stroke="#000080" stroke-width="1"/>
<polyline points="310.5,751.5 308.5,748.5 306.5,746.5 303.5,743.5 301.5,740.5 299.5,737.5 296.5,734.5 294.5,732.5 292.5,729.5 290.5,726.5 287.5,723.5 285.5,720.5 283.5,718.5 281.5,715.5 278.5,712.5 276.5,709.5 274.5,706.5 272.5,703.5 270.5,700.5 267.5,697.5 265.5,695.5 263.5,692.5 261.5,689.5 258.5,686.5 256.5,683.5 254.5,680.5 252.5,677.5 250.5,674.5 247.5,672.5 245.5,669.5 243.5,666.5 241.5,663.5 239.5,660.5 236.5,657.5 234.5,654.5 232.5,651.5 230.5,648.5 228.5,645.5 226.5,642.5 224.5,639.5 222.5,635.5 220.5,632.5 218.5,629.5 216.5,626.5 214.5,623.5 212.5,620.5 210.5,616.5 208.5,613.5 206.5,610.5 204.5,607.5 202.5,603.5 200.5,600.5 199.5,596.5 197.5,593.5 195.5,590.5 193.5,586.5 192.5,583.5 190.5,579.5 188.5,576.5 187.5,572.5 185.5,569.5 183.5,565.5 182.5,562.5 180.5,558.5 179.5,554.5 177.5,550.5 176.5,546.5 174.5,543.5 173.5,539.5 172.5,535.5 170.5,531.5 169.5,527.5 168.5,523.5 166.5,519.5 165.5,515.5 164.5,511.5 163.5,507.5 162.5,503.5 161.5,499.5 160.5,494.5 159.5,490.5 158.5,486.5 157.5,481.5 156.5,477.5 155.5,473.5 155.5,468.5 154.5,464.5 153.5,459.5 153.5,454.5 152.5,449.5 152.5,445.5 151.5,439.5 151.5,435.5 151.5,430.5 150.5,425.5 150.5,420.5 150.5,415.5 150.5,410.5 150.5,405.5 150.5,399.5 150.5,394.5 150.5,389.5 150.5,383.5 150.5,378.5 151.5,373.5 151.5,368.5 151.5,363.5 152.5,358.5 152.5,353.5 153.5,347.5 153.5,343.5 154.5,338.5 154.5,333.5 155.5,328.5 155.5,324.5 156.5,318.5 157.5,313.5 158.5,309.5 158.5,304.5 159.5,300.5 160.5,295.5 161.5,290.5 162.5,286.5 163.5,281.5 164.5,275.5 165.5,271.5 166.5,267.5 167.5,263.5 168.5,259.5 169.5,254.5 170.5,250.5 171.5,245.5 173.5,241.5 174.5,236.5 175.5,231.5 176.5,226.5 178.5,222.5 179.5,217.5 181.5,212.5 182.5,206.5 183.5,203.5 185.5,199.5 186.5,195.5 187.5,191.5 188.5,186.5 190.5,182.5 191.5,178.5 192.5,174.5 194.5,169.5 195.5,165.5 197.5,160.5 199.5,156.5 200.5,151.5 202.5,146.5 204.5,141.5 206.5,136.5 208.5,131.5 210.5,126.5 212.5,122.5 213.5,119.5 215.5,115.5 216.5,111.5 218.5,107.5 220.5,103.5 221.5,100.5 223.5,96.5 225.5,92.5 227.5,87.5 229.5,83.5 231.5,79.5 233.5,75.5 235.5,70.5 237.5,66.5 239.5,62.5 241.5,57.5 243.5,52.5 245.5,50.5" fill="none" stroke="#000080" stroke-width="1"/>
<polyline points="368.5,751.5 366.5,748.5 364.5,745.5 362.5,742.5 360.5,739.5 358.5,735.5 356.5,732.5 354.5,729.5 352.5,726.5 351.5,723.5 349.5,720.5 347.5,716.5 345.5,713.5 343.5,710.5 341.5,707.5 339.5,704.5 337.5,700.5 335.5,697.5 333.5,694.5 332.5,691.5 330.5,688.5 328.5,685.5 326.5,682.5 324.5,679.5 322.5,675.5 320.5,672.5 318.5,669.5 315.5,666.5 313.5,663.5 311.5,660.5 309.5,657.5 307.5,654.5 305.5,650.5 303.5,647.5 301.5,644.5 299.5,641.5 297.5,638.5 295.5,635.5 293.5,632.5 291.5,628.5 289.5,625.5 287.5,622.5 285.5,619.5 283.5,616.5 282.5,612.5 280.5,609.5 278.5,606.5 276.5,602.5 274.5,599.5 272.5,596.5 270.5,593.5 269.5,589.5 267.5,586.5 265.5,582.5 263.5,579.5 261.5,576.5 260.5,572.5 258.5,569.5 256.5,565.5 254.5,562.5 253.5,558.5 251.5,555.5 249.5,551.5 248.5,548.5 246.5,544.5 245.5,540.5 243.5,536.5 241.5,533.5 240.5,529.5 239.5,525.5 237.5,522.5 236.5,518.5 234.5,514.5 233.5,510.5 232.5,506.5 230.5,502.5 229.5,498.5 228.5,494.5 227.5,490.5 226.5,486.5 225.5,482.5 224.5,478.5 222.5,473.5 221.5,469.5 221.5,465.5 220.5,460.5 219.5,456.5 218.5,451.5 217.5,447.5 217.5,443.5 216.5,438.5 215.5,433.5 215.5,428.5 214.5,424.5 214.5,419.5 213.5,413.5 213.5,409.5 213.5,404.5 212.5,399.5 212.5,394.5 212.5,389.5 212.5,384.5 212.5,379.5 212.5,373.5 212.5,368.5 212.5,363.5 212.5,358.5 212.5,353.5 212.5,347.5 212.5,342.5 213.5,337.5 213.5,332.5 214.5,327.5 214.5,322.5 214.5,317.5 215.5,312.5 216.5,306.5 216.5,302.5 217.5,297.5 218.5,292.5 218.5,287.5 219.5,283.5 220.5,278.5 221.5,272.5 222.5,267.5 223.5,263.5 223.5,259.5 224.5,254.5 225.5,250.5 226.5,245.5 227.5,241.5 228.5,236.5 229.5,231.5 230.5,226.5 232.5,222.5 233.5,217.5 234.5,212.5 235.5,206.5 237.5,201.5 238.5,197.5 239.5,193.5 240.5,189.5 241.5,185.5 242.5,181.5 244.5,177.5 245.5,172.5 246.5,168.5 248.5,163.5 249.5,159.5 251.5,154.5 252.5,149.5 254.5,144.5 255.5,140.5 257.5,134.5 259.5,129.5 261.5,124.5 263.5,119.5 265.5,115.5 266.5,111.5 268.5,107.5 269.5,103.5 271.5,100.5 272.5,96.5 274.5,92.5 276.5,87.5 278.5,83.5 279.5,79.5 281.5,75.5 283.5,70.5 285.5,66.5 287.5,62.5 289.5,57.5 291.5,52.5 292.5,50.5" fill="none" stroke="#000080" stroke-width="1"/>
<polyline points="425.5,751.5 424.5,747.5 422.5,744.5 421.5,740.5 420.5,736.5 418.5,733.5 417.5,729.5 416.5,725.5 414.5,721.5 413.5,718.5 412.5,714.5 411.5,710.5 409.5,706.5 408.5,702.5 407.5,698.5 406.5,695.5 404.5,691.5 403.5,687.5 401.5,684.5 400.5,680.5 398.5,676.5 397.5,673.5 396.5,669.5 394.5,665.5 393.5,662.5 391.5,658.5 389.5,654.5 388.5,651.5 386.5,647.5 385.5,644.5 383.5,640.5 382.5,636.5 380.5,633.5 378.5,629.5 377.5,626.5 375.5,622.5 373.5,619.5 372.5,615.5 370.5,612.5 369.5,608.5 367.5,605.5 365.5,601.5 364.5,598.5 362.5,594.5 360.5,590.5 359.5,587.5 357.5,584.5 356.5,580.5 354.5,576.5 352.5,573.5 351.5,569.5 349.5,566.5 347.5,562.5 346.5,559.5 344.5,555.5 342.5,552.5 341.5,548.5 339.5,545.5 337.5,541.5 336.5,537.5 334.5,534.5 333.5,530.5 331.5,526.5 330.5,523.5 328.5,519.5 327.5,515.5 325.5,511.5 324.5,507.5 322.5,504.5 321.5,500.5 319.5,496.5 318.5,492.5 317.5,488.5 315.5,484.5 314.5,480.5 313.5,476.5 311.5,472.5 310.5,468.5 309.5,464.5 308.5,460.5 307.5,456.5 306.5,451.5 305.5,447.5 304.5,443.5 303.5,438.5 302.5,434.5 301.5,430.5 300.5,425.5 299.5,421.5 299.5,416.5 298.5,412.5 297.5,407.5 297.5,402.5 296.5,397.5 295.5,392.5 295.5,387.5 294.5,382.5 294.5,377.5 294.5,373.5 293.5,368.5 293.5,363.5 293.5,358.5 293.5,353.5 293.5,347.5 292.5,342.5 292.5,337.5 292.5,331.5 293.5,325.5 293.5,320.5 293.5,315.5 293.5,310.5 293.5,304.5 294.5,299.5 294.5,294.5 295.5,289.5 295.5,285.5 296.5,280.5 296.5,274.5 297.5,269.5 297.5,264.5 298.5,259.5 299.5,254.5 299.5,250.5 300.5,245.5 301.5,241.5 302.5,236.5 303.5,231.5 303.5,226.5 304.5,222.5 305.5,217.5 306.5,212.5 307.5,206.5 308.5,201.5 309.5,196.5 311.5,191.5 312.5,186.5 312.5,182.5 313.5,178.5 315.5,174.5 316.5,169.5 317.5,165.5 318.5,160.5 319.5,156.5 320.5,151.5 322.5,146.5 323.5,141.5 325.5,136.5 326.5,131.5 328.5,126.5 330.5,120.5 332.5,115.5 333.5,111.5 334.5,107.5 336.5,103.5 337.5,100.5 339.5,96.5 340.5,92.5 342.5,87.5 343.5,83.5 345.5,79.5 347.5,75.5 348.5,70.5 350.5,66.5 352.5,62.5 354.5,57.5 356.5,52.5 357.5,50.5" fill="none" stroke="#000080" stroke-width="1"/>
<polyline points="483.5,751.5 482.5,747.5 481.5,742.5 481.5,738.5 480.5,733.5 480.5,729.5 479.5,724.5 479.5,720.5 478.5,715.5 478.5,710.5 478.5,705.5 477.5,701.5 477.5,696.5 476.5,691.5 476.5,687.5 476.5,682.5 475.5,677.5 475.5,673.5 474.5,668.5 474.5,664.5 473.5,659.5 472.5,654.5 472.5,650.5 471.5,645.5 471.5,641.5 470.5,636.5 470.5,632.5 469.5,627.5 468.5,623.5 468.5,618.5 467.5,614.5 467.5,609.5 466.5,605.5 465.5,600.5 465.5,596.5 464.5,591.5 463.5,587.5 462.5,582.5 461.5,578.5 461.5,573.5 460.5,569.5 459.5,565.5 458.5,561.5 457.5,556.5 456.5,552.5 455.5,548.5 454.5,544.5 453.5,539.5 452.5,535.5 451.5,531.5 450.5,527.5 449.5,523.5 448.5,518.5 447.5,514.5 446.5,510.5 445.5,506.5 444.5,502.5 443.5,498.5 441.5,493.5 440.5,489.5 439.5,485.5 438.5,481.5 437.5,477.5 436.5,473.5 435.5,469.5 434.5,465.5 433.5,460.5 432.5,456.5 431.5,452.5 429.5,448.5 428.5,443.5 427.5,439.5 426.5,435.5 426.5,431.5 425.5,426.5 424.5,422.5 423.5,417.5 422.5,413.5 421.5,408.5 420.5,403.5 419.5,399.5 418.5,395.5 417.5,390.5 417.5,386.5 416.5,381.5 415.5,377.5 415.5,372.5 414.5,367.5 413.5,362.5 413.5,357.5 412.5,352.5 411.5,347.5 411.5,343.5 411.5,338.5 410.5,333.5 410.5,328.5 409.5,324.5 409.5,318.5 409.5,313.5 409.5,308.5 409.5,303.5 408.5,297.5 408.5,291.5 408.5,286.5 409.5,281.5 409.5,275.5 409.5,270.5 409.5,265.5 409.5,260.5 410.5,254.5 410.5,249.5 411.5,243.5 411.5,238.5 411.5,234.5 412.5,229.5 412.5,224.5 413.5,219.5 413.5,214.5 414.5,209.5 415.5,204.5 415.5,199.5 416.5,193.5 417.5,188.5 418.5,182.5 418.5,177.5 419.5,172.5 420.5,168.5 421.5,163.5 422.5,159.5 423.5,154.5 424.5,149.5 425.5,144.5 426.5,140.5 427.5,134.5 428.5,129.5 430.5,124.5 431.5,119.5 433.5,113.5 434.5,107.5 436.5,102.5 437.5,98.5 438.5,94.5 440.5,89.5 441.5,85.5 442.5,81.5 444.5,77.5 445.5,73.5 447.5,68.5 448.5,64.5 450.5,59.5 451.5,55.5 453.5,50.5" fill="none" stroke="#000080" stroke-width="1"/>
<polyline points="541.5,751.5 541.5,746.5 541.5,741.5 541.5,736.5 541.5,732.5 542.5,727.5 542.5,722.5 542.5,718.5 543.5,713.5 543.5,708.5 544.5,704.5 544.5,699.5 545.5,695.5 546.5,690.5 546.5,686.5 547.5,681.5 547.5,677.5 548.5,672.5 548.5,668.5 549.5,663.5 549.5,658.5 550.5,654.5 551.5,649.5 551.5,645.5 552.5,640.5 552.5,636.5 553.5,632.5 554.5,627.5 554.5,623.5 555.5,618.5 556.5,614.5 556.5,609.5 557.5,605.5 558.5,600.5 558.5,596.5 559.5,591.5 560.5,587.5 560.5,582.5 561.5,578.5 562.5,573.5 563.5,569.5 563.5,564.5 564.5,560.5 564.5,555.5 565.5,551.5 566.5,546.5 566.5,542.5 567.5,537.5 568.5,533.5 568.5,528.5 569.5,524.5 570.5,519.5 570.5,515.5 571.5,510.5 572.5,505.5 572.5,501.5 573.5,496.5 573.5,491.5 574.5,486.5 574.5,482.5 575.5,477.5 575.5,473.5 576.5,468.5 576.5,463.5 577.5,459.5 578.5,454.5 578.5,449.5 579.5,444.5 579.5,439.5 579.5,435.5 580.5,430.5 580.5,425.5 581.5,420.5 581.5,415.5 582.5,410.5 582.5,405.5 582.5,400.5 582.5,395.5 583.5,390.5 583.5,385.5 583.5,380.5 584.5,375.5 584.5,369.5 584.5,364.5 584.5,359.5 584.5,354.5 584.5,349.5 585.5,344.5 585.5,338.5 585.5,333.5 585.5,327.5 585.5,322.5 585.5,317.5 585.5,312.5 585.5,306.5 585.5,301.5 585.5,295.5 585.5,289.5 585.5,284.5 585.5,279.5 585.5,273.5 586.5,268.5 586.5,263.5 586.5,258.5 586.5,252.5 586.5,246.5 586.5,241.5 586.5,235.5 587.5,229.5 587.5,224.5 587.5,219.5 587.5,214.5 587.5,209.5 588.5,204.5 588.5,199.5 588.5,193.5 588.5,188.5 589.5,182.5 589.5,177.5 589.5,171.5 590.5,165.5 590.5,159.5 591.5,154.5 591.5,149.5 592.5,144.5 593.5,140.5 593.5,134.5 594.5,129.5 595.5,124.5 596.5,119.5 597.5,113.5 598.5,107.5 599.5,102.5 600.5,96.5 602.5,89.5 603.5,85.5 604.5,81.5 605.5,77.5 606.5,73.5 607.5,68.5 608.5,64.5 609.5,59.5 610.5,55.5 611.5,50.5" fill="none" stroke="#000080" stroke-width="1"/>
<polyline points="600.5,751.5 600.5,747.5 601.5,742.5 601.5,738.5 602.5,733.5 603.5,729.5 604.5,725.5 604.5,720.5 605.5,716.5 606.5,712.5 607.5,708.5 608.5,704.5 609.5,700.5 610.5,695.5 611.5,691.5 612.5,687.5 613.5,683.5 614.5,679.5 615.5,675.5 616.5,671.5 617.5,667.5 618.5,663.5 619.5,659.5 620.5,655.5 621.5,651.5 623.5,647.5 624.5,643.5 625.5,639.5 626.5,635.5 627.5,631.5 628.5,627.5 630.5,623.5 631.5,619.5 632.5,615.5 633.5,612.5 635.5,608.5 636.5,604.5 637.5,600.5 638.5,596.5 640.5,592.5 641.5,588.5 642.5,584.5 644.5,580.5 645.5,577.5 646.5,573.5 648.5,569.5 649.5,565.5 650.5,561.5 652.5,557.5 653.5,554.5 654.5,550.5 656.5,546.5 657.5,542.5 658.5,538.5 660.5,535.5 661.5,531.5 663.5,527.5 664.5,523.5 666.5,519.5 667.5,516.5 668.5,512.5 670.5,508.5 671.5,504.5 673.5,501.5 674.5,497.5 676.5,493.5 677.5,489.5 679.5,485.5 680.5,482.5 682.5,478.5 683.5,474.5 685.5,470.5 686.5,466.5 688.5,463.5 689.5,459.5 691.5,455.5 692.5,451.5 694.5,448.5 696.5,444.5 697.5,440.5 699.5,436.5 700.5,433.5 702.5,429.5 703.5,425.5 705.5,421.5 707.5,417.5 708.5,413.5 710.5,409.5 712.5,406.5 713.5,402.5 715.5,399.5 716.5,395.5 718.5,391.5 720.5,387.5 721.5,383.5 723.5,379.5 725.5,375.5 726.5,371.5 728.5,367.5 730.5,364.5 731.5,360.5 733.5,356.5 734.5,353.5 736.5,349.5 738.5,345.5 739.5,341.5 741.5,337.5 743.5,333.5 745.5,329.5 746.5,325.5 748.5,321.5 750.5,317.5 752.5,312.5 754.5,309.5 755.5,305.5 757.5,302.5 758.5,298.5 760.5,294.5 762.5,290.5 763.5,286.5 765.5,283.5 767.5,279.5 769.5,274.5 771.5,270.5 772.5,266.5 774.5,262.5 776.5,258.5 778.5,253.5 780.5,249.5 782.5,244.5 784.5,240.5 786.5,236.5 787.5,233.5 789.5,229.5 790.5,225.5 792.5,222.5 793.5,218.5 795.5,214.5 797.5,210.5 798.5,206.5 800.5,203.5 802.5,199.5 803.5,195.5 805.5,191.5 807.5,186.5 808.5,182.5 810.5,178.5 812.5,174.5 814.5,169.5 815.5,165.5 817.5,160.5 819.5,156.5 821.5,151.5 823.5,146.5 825.5,141.5 827.5,136.5 829.5,131.5 831.5,126.5 833.5,122.5 834.5,119.5 836.5,115.5 837.5,111.5 839.5,107.5 840.5,103.5 842.5,100.5 844.5,96.5 845.5,92.5 847.5,87.5 849.5,83.5 851.5,79.5 852.5,75.5 854.5,70.5 856.5,66.5 858.5,62.5 860.5,57.5 861.5,52.5 862.5,50.5" fill="none" stroke="#000080" stroke-width="1"/>
<line x1="-847.5" y1="749.5" x2="-148.5" y2="50.5" stroke="#fff" stroke-width="1"/>
<line x1="-787.5" y1="749.5" x2="-88.5" y2="50.5" stroke="#fff" stroke-width="1"/>
<line x1="-727.5" y1="749.5" x2="-28.5" y2="50.5" stroke="#fff" stroke-width="1"/>
<line x1="-667.5" y1="749.5" x2="31.5" y2="50.5" stroke="#fff" stroke-width="1"/>
<line x1="-607.5" y1="749.5" x2="91.5" y2="50.5" stroke="#fff" stroke-width="1"/>
<line x1="-547.5" y1="749.5" x2="151.5" y2="50.5" stroke="#fff" stroke-width="1"/>
<line x1="-487.5" y1="749.5" x2="211.5" y2="50.5" stroke="#fff" stroke-width="1"/>
<line x1="-427.5" y1="749.5" x2="271.5" y2="50.5" stroke="#fff" stroke-width="1"/>
<line x1="-367.5" y1="749.5" x2="331.5" y2="50.5" stroke="#fff" stroke-width="1"/>
<line x1="-307.5" y1="749.5" x2="391.5" y2="50.5" stroke="#fff" stroke-width="1"/>
<line x1="-247.5" y1="749.5" x2="451.5" y2="50.5" stroke="#fff" stroke-width="1"/>
<line x1="-187.5" y1="749.5" x2="511.5" y2="50.5" stroke="#fff" stroke-width="1"/>
<line x1="-127.5" y1="749.5" x2="571.5" y2="50.5" stroke="#fff" stroke-width="1"/>
<line x1="-67.5" y1="749.5" x2="631.5" y2="50.5" stroke="#fff" stroke-width="1"/>
<line x1="-7.5" y1="749.5" x2="691.5" y2="50.5" stroke="#fff" stroke-width="1"/>
<line x1="52.5" y1="749.5" x2="751.5" y2="50.5" stroke="#fff" stroke-width="1"/>
<line x1="112.5" y1="749.5" x2="811.5" y2="50.5" stroke="#fff" stroke-width="1"/>
<line x1="172.5" y1="749.5" x2="871.5" y2="50.5" stroke="#fff" stroke-width="1"/>
<line x1="232.5" y1="749.5" x2="931.5" y2="50.5" stroke="#fff" stroke-width="1"/>
<line x1="292.5" y1="749.5" x2="991.5" y2="50.5" stroke="#fff" stroke-width="1"/>
<line x1="352.5" y1="749.5" x2="1051.5" y2="50.5" stroke="#fff" stroke-width="1"/>
<line x1="412.5" y1="749.5" x2="1111.5" y2="50.5" stroke="#fff" stroke-width="1"/>
<line x1="472.5" y1="749.5" x2="1171.5" y2="50.5" stroke="#fff" stroke-width="1"/>
<line x1="532.5" y1="749.5" x2="1231.5" y2="50.5" stroke="#fff" stroke-width="1"/>
<line x1="592.5" y1="749.5" x2="1291.5" y2="50.5" stroke="#fff" stroke-width="1"/>
<line x1="652.5" y1="749.5" x2="1351.5" y2="50.5" stroke="#fff" stroke-width="1"/>
<polyline points="484.5,51.5 473.5,93.5 462.5,133.5 456.5,160.5 451.5,200.5 446.5,237.5 445.5,264.5 446.5,292.5 447.5,325.5 449.5,343.5 451.5,351.5 452.5,368.5 455.5,390.5 457.5,401.5 460.5,416.5 466.5,445.5 467.5,454.5 472.5,473.5 477.5,510.5 481.5,529.5 483.5,548.5 485.5,570.5 488.5,607.5 490.5,634.5 492.5,662.5 493.5,694.5 559.5,738.5" fill="none" stroke="#ffc0ff" stroke-width="1"/>
<polyline points="475.5,51.5 461.5,98.5 451.5,133.5 446.5,160.5 440.5,200.5 435.5,237.5 434.5,251.5 434.5,278.5 434.5,315.5 435.5,329.5 438.5,351.5 441.5,376.5 443.5,383.5 446.5,400.5 449.5,419.5 453.5,445.5 458.5,464.5 465.5,496.5 470.5,529.5 476.5,558.5 477.5,570.5 480.5,593.5 483.5,621.5 485.5,655.5 487.5,685.5 487.5,693.5 488.5,703.5 488.5,703.5 540.5,738.5" fill="none" stroke="#ff00ff" stroke-width="1"/>
<polyline points="488.5,703.5 466.5,738.5" fill="none" stroke="#ff00ff" stroke-width="1"/>
<polyline points="558.5,51.5 536.5,72.5 521.5,85.5 506.5,99.5 492.5,113.5 477.5,125.5 462.5,139.5 455.5,146.5 441.5,181.5 435.5,195.5 425.5,219.5 398.5,274.5 379.5,321.5 383.5,357.5 391.5,392.5 392.5,412.5 394.5,445.5 394.5,483.5 392.5,493.5 383.5,512.5 381.5,530.5 383.5,545.5 383.5,560.5 382.5,570.5 381.5,575.5 380.5,587.5 384.5,598.5 396.5,610.5 404.5,620.5 408.5,633.5 411.5,641.5 428.5,648.5 428.5,658.5 429.5,666.5 433.5,674.5 445.5,687.5 460.5,700.5 472.5,707.5 472.5,716.5 472.5,722.5 472.5,732.5 466.5,738.5" fill="none" stroke="#00ffff" stroke-width="1"/>
<polyline points="700.5,58.5 661.5,93.5 601.5,146.5 505.5,219.5 433.5,274.5 416.5,315.5 412.5,321.5 407.5,343.5 403.5,361.5 398.5,379.5 396.5,396.5 395.5,412.5 395.5,424.5 396.5,445.5 398.5,461.5 399.5,472.5 403.5,493.5 407.5,512.5 414.5,530.5 421.5,545.5 425.5,560.5 427.5,575.5 433.5,586.5 435.5,598.5 435.5,610.5 438.5,621.5 443.5,630.5 450.5,641.5 460.5,648.5 461.5,658.5 467.5,665.5 476.5,674.5 486.5,686.5 498.5,700.5 509.5,708.5 517.5,716.5 524.5,722.5 531.5,729.5 540.5,738.5" fill="none" stroke="#ff0000" stroke-width="1"/>
<rect x="599" y="146" width="5" height="1" fill="#fff"/><rect x="601" y="144" width="1" height="5" fill="#fff"/>
<rect x="503" y="219" width="5" height="1" fill="#fff"/><rect x="505" y="217" width="1" height="5" fill="#fff"/>
<rect x="431" y="274" width="5" height="1" fill="#fff"/><rect x="433" y="272" width="1" height="5" fill="#fff"/>
<rect x="401" y="361" width="5" height="1" fill="#fff"/><rect x="403" y="359" width="1" height="5" fill="#fff"/>
<rect x="394" y="396" width="5" height="1" fill="#fff"/><rect x="396" y="394" width="1" height="5" fill="#fff"/>
<rect x="393" y="424" width="5" height="1" fill="#fff"/><rect x="395" y="422" width="1" height="5" fill="#fff"/>
<rect x="397" y="472" width="5" height="1" fill="#fff"/><rect x="399" y="470" width="1" height="5" fill="#fff"/>
<rect x="401" y="493" width="5" height="1" fill="#fff"/><rect x="403" y="491" width="1" height="5" fill="#fff"/>
<rect x="405" y="512" width="5" height="1" fill="#fff"/><rect x="407" y="510" width="1" height="5" fill="#fff"/>
<rect x="419" y="545" width="5" height="1" fill="#fff"/><rect x="421" y="543" width="1" height="5" fill="#fff"/>
<rect x="423" y="560" width="5" height="1" fill="#fff"/><rect x="425" y="558" width="1" height="5" fill="#fff"/>
<rect x="425" y="575" width="5" height="1" fill="#fff"/><rect x="427" y="573" width="1" height="5" fill="#fff"/>
<rect x="433" y="598" width="5" height="1" fill="#fff"/><rect x="435" y="596" width="1" height="5" fill="#fff"/>
<rect x="433" y="610" width="5" height="1" fill="#fff"/><rect x="435" y="608" width="1" height="5" fill="#fff"/>
<rect x="436" y="621" width="5" height="1" fill="#fff"/><rect x="438" y="619" width="1" height="5" fill="#fff"/>
<rect x="448" y="641" width="5" height="1" fill="#fff"/><rect x="450" y="639" width="1" height="5" fill="#fff"/>
<rect x="458" y="648" width="5" height="1" fill="#fff"/><rect x="460" y="646" width="1" height="5" fill="#fff"/>
<rect x="459" y="658" width="5" height="1" fill="#fff"/><rect x="461" y="656" width="1" height="5" fill="#fff"/>
<rect x="474" y="674" width="5" height="1" fill="#fff"/><rect x="476" y="672" width="1" height="5" fill="#fff"/>
<rect x="484" y="686" width="5" height="1" fill="#fff"/><rect x="486" y="684" width="1" height="5" fill="#fff"/>
<rect x="496" y="700" width="5" height="1" fill="#fff"/><rect x="498" y="698" width="1" height="5" fill="#fff"/>
<rect x="507" y="708" width="5" height="1" fill="#fff"/><rect x="509" y="706" width="1" height="5" fill="#fff"/>
<rect x="515" y="716" width="5" height="1" fill="#fff"/><rect x="517" y="714" width="1" height="5" fill="#fff"/>
<rect x="522" y="722" width="5" height="1" fill="#fff"/><rect x="524" y="720" width="1" height="5" fill="#fff"/>
<rect x="529" y="729" width="5" height="1" fill="#fff"/><rect x="531" y="727" width="1" height="5" fill="#fff"/>
<rect x="453" y="146" width="5" height="1" fill="#fff"/><rect x="455" y="144" width="1" height="5" fill="#fff"/>
<rect x="423" y="219" width="5" height="1" fill="#fff"/><rect x="425" y="217" width="1" height="5" fill="#fff"/>
<rect x="396" y="274" width="5" height="1" fill="#fff"/><rect x="398" y="272" width="1" height="5" fill="#fff"/>
<rect x="381" y="360" width="5" height="1" fill="#fff"/><rect x="383" y="358" width="1" height="5" fill="#fff"/>
<rect x="389" y="394" width="5" height="1" fill="#fff"/><rect x="391" y="392" width="1" height="5" fill="#fff"/>
<rect x="390" y="424" width="5" height="1" fill="#fff"/><rect x="392" y="422" width="1" height="5" fill="#fff"/>
<rect x="391" y="472" width="5" height="1" fill="#fff"/><rect x="393" y="470" width="1" height="5" fill="#fff"/>
<rect x="390" y="493" width="5" height="1" fill="#fff"/><rect x="392" y="491" width="1" height="5" fill="#fff"/>
<rect x="381" y="512" width="5" height="1" fill="#fff"/><rect x="383" y="510" width="1" height="5" fill="#fff"/>
<rect x="381" y="545" width="5" height="1" fill="#fff"/><rect x="383" y="543" width="1" height="5" fill="#fff"/>
<rect x="381" y="560" width="5" height="1" fill="#fff"/><rect x="383" y="558" width="1" height="5" fill="#fff"/>
<rect x="379" y="575" width="5" height="1" fill="#fff"/><rect x="381" y="573" width="1" height="5" fill="#fff"/>
<rect x="382" y="598" width="5" height="1" fill="#fff"/><rect x="384" y="596" width="1" height="5" fill="#fff"/>
<rect x="394" y="610" width="5" height="1" fill="#fff"/><rect x="396" y="608" width="1" height="5" fill="#fff"/>
<rect x="402" y="620" width="5" height="1" fill="#fff"/><rect x="404" y="618" width="1" height="5" fill="#fff"/>
<rect x="409" y="641" width="5" height="1" fill="#fff"/><rect x="411" y="639" width="1" height="5" fill="#fff"/>
<rect x="426" y="648" width="5" height="1" fill="#fff"/><rect x="428" y="646" width="1" height="5" fill="#fff"/>
<rect x="426" y="658" width="5" height="1" fill="#fff"/><rect x="428" y="656" width="1" height="5" fill="#fff"/>
<rect x="431" y="674" width="5" height="1" fill="#fff"/><rect x="433" y="672" width="1" height="5" fill="#fff"/>
<rect x="443" y="687" width="5" height="1" fill="#fff"/><rect x="445" y="685" width="1" height="5" fill="#fff"/>
<rect x="458" y="700" width="5" height="1" fill="#fff"/><rect x="460" y="698" width="1" height="5" fill="#fff"/>
<rect x="470" y="707" width="5" height="1" fill="#fff"/><rect x="472" y="705" width="1" height="5" fill="#fff"/>
<rect x="470" y="716" width="5" height="1" fill="#fff"/><rect x="472" y="714" width="1" height="5" fill="#fff"/>
<rect x="470" y="722" width="5" height="1" fill="#fff"/><rect x="472" y="720" width="1" height="5" fill="#fff"/>
<rect x="470" y="732" width="5" height="1" fill="#fff"/><rect x="472" y="730" width="1" height="5" fill="#fff"/>
<polyline points="94.5,51.5 79.5,125.5 73.5,147.5 82.5,219.5 139.5,273.5 134.5,301.5 130.5,321.5 136.5,361.5 149.5,394.5 144.5,423.5 148.5,450.5 135.5,472.5 107.5,493.5 80.5,512.5 70.5,529.5 84.5,545.5 90.5,560.5 79.5,574.5 89.5,587.5 110.5,598.5 134.5,610.5 157.5,620.5 168.5,630.5 164.5,640.5 154.5,648.5 131.5,658.5 120.5,666.5 113.5,673.5 108.5,686.5 116.5,699.5 123.5,703.5 129.5,708.5 135.5,716.5 142.5,722.5 146.5,730.5 150.5,733.5 154.5,738.5" fill="none" stroke="#ff0080" stroke-width="1"/>
<polyline points="152.5,51.5 146.5,139.5 146.5,147.5 175.5,219.5 223.5,273.5 218.5,319.5 222.5,345.5 223.5,360.5 229.5,394.5 223.5,423.5 224.5,450.5 199.5,472.5 188.5,493.5 169.5,512.5 157.5,529.5 151.5,545.5 157.5,560.5 169.5,574.5 175.5,587.5 181.5,598.5 205.5,610.5 236.5,620.5 247.5,630.5 241.5,640.5 230.5,648.5 205.5,658.5 194.5,666.5 182.5,673.5 159.5,686.5 139.5,699.5 123.5,703.5 103.5,709.5 91.5,716.5 80.5,722.5 73.5,729.5 68.5,733.5 68.5,738.5" fill="none" stroke="#00ff00" stroke-width="1"/>
<rect x="71" y="147" width="5" height="1" fill="#fff"/><rect x="73" y="145" width="1" height="5" fill="#fff"/>
<rect x="80" y="219" width="5" height="1" fill="#fff"/><rect x="82" y="217" width="1" height="5" fill="#fff"/>
<rect x="137" y="273" width="5" height="1" fill="#fff"/><rect x="139" y="271" width="1" height="5" fill="#fff"/>
<rect x="134" y="361" width="5" height="1" fill="#fff"/><rect x="136" y="359" width="1" height="5" fill="#fff"/>
<rect x="147" y="394" width="5" height="1" fill="#fff"/><rect x="149" y="392" width="1" height="5" fill="#fff"/>
<rect x="142" y="423" width="5" height="1" fill="#fff"/><rect x="144" y="421" width="1" height="5" fill="#fff"/>
<rect x="133" y="472" width="5" height="1" fill="#fff"/><rect x="135" y="470" width="1" height="5" fill="#fff"/>
<rect x="105" y="493" width="5" height="1" fill="#fff"/><rect x="107" y="491" width="1" height="5" fill="#fff"/>
<rect x="78" y="512" width="5" height="1" fill="#fff"/><rect x="80" y="510" width="1" height="5" fill="#fff"/>
<rect x="82" y="545" width="5" height="1" fill="#fff"/><rect x="84" y="543" width="1" height="5" fill="#fff"/>
<rect x="88" y="560" width="5" height="1" fill="#fff"/><rect x="90" y="558" width="1" height="5" fill="#fff"/>
<rect x="77" y="574" width="5" height="1" fill="#fff"/><rect x="79" y="572" width="1" height="5" fill="#fff"/>
<rect x="87" y="587" width="5" height="1" fill="#fff"/><rect x="89" y="585" width="1" height="5" fill="#fff"/>
<rect x="108" y="598" width="5" height="1" fill="#fff"/><rect x="110" y="596" width="1" height="5" fill="#fff"/>
<rect x="132" y="610" width="5" height="1" fill="#fff"/><rect x="134" y="608" width="1" height="5" fill="#fff"/>
<rect x="155" y="620" width="5" height="1" fill="#fff"/><rect x="157" y="618" width="1" height="5" fill="#fff"/>
<rect x="162" y="640" width="5" height="1" fill="#fff"/><rect x="164" y="638" width="1" height="5" fill="#fff"/>
<rect x="152" y="648" width="5" height="1" fill="#fff"/><rect x="154" y="646" width="1" height="5" fill="#fff"/>
<rect x="129" y="658" width="5" height="1" fill="#fff"/><rect x="131" y="656" width="1" height="5" fill="#fff"/>
<rect x="118" y="666" width="5" height="1" fill="#fff"/><rect x="120" y="664" width="1" height="5" fill="#fff"/>
<rect x="111" y="673" width="5" height="1" fill="#fff"/><rect x="113" y="671" width="1" height="5" fill="#fff"/>
<rect x="106" y="686" width="5" height="1" fill="#fff"/><rect x="108" y="684" width="1" height="5" fill="#fff"/>
<rect x="114" y="699" width="5" height="1" fill="#fff"/><rect x="116" y="697" width="1" height="5" fill="#fff"/>
<rect x="121" y="703" width="5" height="1" fill="#fff"/><rect x="123" y="701" width="1" height="5" fill="#fff"/>
<rect x="133" y="716" width="5" height="1" fill="#fff"/><rect x="135" y="714" width="1" height="5" fill="#fff"/>
<rect x="140" y="722" width="5" height="1" fill="#fff"/><rect x="142" y="720" width="1" height="5" fill="#fff"/>
<rect x="144" y="730" width="5" height="1" fill="#fff"/><rect x="146" y="728" width="1" height="5" fill="#fff"/>
<rect x="148" y="733" width="5" height="1" fill="#fff"/><rect x="150" y="731" width="1" height="5" fill="#fff"/>
<rect x="144" y="147" width="5" height="1" fill="#fff"/><rect x="146" y="145" width="1" height="5" fill="#fff"/>
<rect x="173" y="219" width="5" height="1" fill="#fff"/><rect x="175" y="217" width="1" height="5" fill="#fff"/>
<rect x="221" y="273" width="5" height="1" fill="#fff"/><rect x="223" y="271" width="1" height="5" fill="#fff"/>
<rect x="221" y="360" width="5" height="1" fill="#fff"/><rect x="223" y="358" width="1" height="5" fill="#fff"/>
<rect x="227" y="394" width="5" height="1" fill="#fff"/><rect x="229" y="392" width="1" height="5" fill="#fff"/>
<rect x="221" y="423" width="5" height="1" fill="#fff"/><rect x="223" y="421" width="1" height="5" fill="#fff"/>
<rect x="197" y="472" width="5" height="1" fill="#fff"/><rect x="199" y="470" width="1" height="5" fill="#fff"/>
<rect x="186" y="493" width="5" height="1" fill="#fff"/><rect x="188" y="491" width="1" height="5" fill="#fff"/>
<rect x="167" y="512" width="5" height="1" fill="#fff"/><rect x="169" y="510" width="1" height="5" fill="#fff"/>
<rect x="149" y="545" width="5" height="1" fill="#fff"/><rect x="151" y="543" width="1" height="5" fill="#fff"/>
<rect x="155" y="560" width="5" height="1" fill="#fff"/><rect x="157" y="558" width="1" height="5" fill="#fff"/>
<rect x="167" y="574" width="5" height="1" fill="#fff"/><rect x="169" y="572" width="1" height="5" fill="#fff"/>
<rect x="173" y="587" width="5" height="1" fill="#fff"/><rect x="175" y="585" width="1" height="5" fill="#fff"/>
<rect x="179" y="598" width="5" height="1" fill="#fff"/><rect x="181" y="596" width="1" height="5" fill="#fff"/>
<rect x="203" y="610" width="5" height="1" fill="#fff"/><rect x="205" y="608" width="1" height="5" fill="#fff"/>
<rect x="234" y="620" width="5" height="1" fill="#fff"/><rect x="236" y="618" width="1" height="5" fill="#fff"/>
<rect x="239" y="640" width="5" height="1" fill="#fff"/><rect x="241" y="638" width="1" height="5" fill="#fff"/>
<rect x="228" y="648" width="5" height="1" fill="#fff"/><rect x="230" y="646" width="1" height="5" fill="#fff"/>
<rect x="203" y="658" width="5" height="1" fill="#fff"/><rect x="205" y="656" width="1" height="5" fill="#fff"/>
<rect x="192" y="666" width="5" height="1" fill="#fff"/><rect x="194" y="664" width="1" height="5" fill="#fff"/>
<rect x="180" y="673" width="5" height="1" fill="#fff"/><rect x="182" y="671" width="1" height="5" fill="#fff"/>
<rect x="157" y="686" width="5" height="1" fill="#fff"/><rect x="159" y="684" width="1" height="5" fill="#fff"/>
<rect x="137" y="699" width="5" height="1" fill="#fff"/><rect x="139" y="697" width="1" height="5" fill="#fff"/>
<rect x="121" y="703" width="5" height="1" fill="#fff"/><rect x="123" y="701" width="1" height="5" fill="#fff"/>
<rect x="89" y="716" width="5" height="1" fill="#fff"/><rect x="91" y="714" width="1" height="5" fill="#fff"/>
<rect x="78" y="722" width="5" height="1" fill="#fff"/><rect x="80" y="720" width="1" height="5" fill="#fff"/>
<rect x="71" y="729" width="5" height="1" fill="#fff"/><rect x="73" y="727" width="1" height="5" fill="#fff"/>
<rect x="66" y="733" width="5" height="1" fill="#fff"/><rect x="68" y="731" width="1" height="5" fill="#fff"/>
<polyline points="61.5,665.5 79.5,673.5 159.5,686.5 250.5,693.5 266.5,694.5 294.5,697.5 341.5,700.5 396.5,702.5 420.5,703.5 440.5,704.5 505.5,706.5 544.5,708.5 608.5,716.5 637.5,722.5 654.5,729.5 661.5,729.5" fill="none" stroke="#ffff00" stroke-width="1"/>
<rect x="79" y="673" width="1" height="1" fill="#fff"/><rect x="79" y="671" width="1" height="5" fill="#fff"/>
<rect x="159" y="686" width="1" height="1" fill="#fff"/><rect x="159" y="684" width="1" height="5" fill="#fff"/>
<rect x="341" y="700" width="1" height="1" fill="#fff"/><rect x="341" y="698" width="1" height="5" fill="#fff"/>
<rect x="544" y="708" width="1" height="1" fill="#fff"/><rect x="544" y="706" width="1" height="5" fill="#fff"/>
<rect x="608" y="716" width="1" height="1" fill="#fff"/><rect x="608" y="714" width="1" height="5" fill="#fff"/>
<rect x="637" y="722" width="1" height="1" fill="#fff"/><rect x="637" y="720" width="1" height="5" fill="#fff"/>
<rect x="654" y="729" width="1" height="1" fill="#fff"/><rect x="654" y="727" width="1" height="5" fill="#fff"/>
<polyline points="584.5,738.5 603.5,736.5 661.5,734.5 700.5,733.5" fill="none" stroke="#ffff00" stroke-width="1"/>
<rect x="584" y="738" width="1" height="1" fill="#fff"/><rect x="584" y="736" width="1" height="5" fill="#fff"/>
<rect x="603" y="736" width="1" height="1" fill="#fff"/><rect x="603" y="734" width="1" height="5" fill="#fff"/>
<polyline points="62.5,657.5 67.5,651.5" fill="none" stroke="#f08000" stroke-width="1"/>
<rect x="62" y="648" width="3" height="1" fill="#fff"/><rect x="63" y="648" width="1" height="1" fill="#fff"/>
<rect x="62" y="657" width="3" height="1" fill="#fff"/><rect x="63" y="657" width="1" height="1" fill="#fff"/>
<polyline points="62.5,666.5 74.5,668.5 82.5,671.5 91.5,673.5 91.5,680.5 90.5,686.5 82.5,699.5 75.5,708.5 82.5,715.5 98.5,723.5 124.5,729.5 133.5,732.5 154.5,734.5 183.5,736.5 203.5,738.5" fill="none" stroke="#f08000" stroke-width="1"/>
<rect x="89" y="673" width="5" height="1" fill="#fff"/><rect x="91" y="671" width="1" height="5" fill="#fff"/>
<rect x="88" y="686" width="5" height="1" fill="#fff"/><rect x="90" y="684" width="1" height="5" fill="#fff"/>
<rect x="80" y="699" width="5" height="1" fill="#fff"/><rect x="82" y="697" width="1" height="5" fill="#fff"/>
<rect x="73" y="708" width="5" height="1" fill="#fff"/><rect x="75" y="706" width="1" height="5" fill="#fff"/>
<rect x="80" y="715" width="5" height="1" fill="#fff"/><rect x="82" y="713" width="1" height="5" fill="#fff"/>
<rect x="96" y="723" width="5" height="1" fill="#fff"/><rect x="98" y="721" width="1" height="5" fill="#fff"/>
<rect x="122" y="729" width="5" height="1" fill="#fff"/><rect x="124" y="727" width="1" height="5" fill="#fff"/>
<rect x="131" y="732" width="5" height="1" fill="#fff"/><rect x="133" y="730" width="1" height="5" fill="#fff"/>
<rect x="181" y="736" width="5" height="1" fill="#fff"/><rect x="183" y="734" width="1" height="5" fill="#fff"/>
<rect x="201" y="738" width="5" height="1" fill="#fff"/><rect x="203" y="736" width="1" height="5" fill="#fff"/>
<polyline points="211.5,738.5 216.5,734.5 221.5,730.5 228.5,722.5 234.5,716.5 243.5,708.5 258.5,703.5 265.5,700.5 271.5,692.5 276.5,686.5 289.5,673.5 296.5,664.5" fill="none" stroke="#c0c000" stroke-width="1"/>
<rect x="209" y="738" width="5" height="1" fill="#fff"/><rect x="211" y="736" width="1" height="5" fill="#fff"/>
<rect x="211" y="737" width="5" height="1" fill="#fff"/><rect x="213" y="735" width="1" height="5" fill="#fff"/>
<rect x="214" y="734" width="5" height="1" fill="#fff"/><rect x="216" y="732" width="1" height="5" fill="#fff"/>
<rect x="216" y="733" width="5" height="1" fill="#fff"/><rect x="218" y="731" width="1" height="5" fill="#fff"/>
<rect x="219" y="730" width="5" height="1" fill="#fff"/><rect x="221" y="728" width="1" height="5" fill="#fff"/>
<rect x="226" y="722" width="5" height="1" fill="#fff"/><rect x="228" y="720" width="1" height="5" fill="#fff"/>
<rect x="241" y="708" width="5" height="1" fill="#fff"/><rect x="243" y="706" width="1" height="5" fill="#fff"/>
<rect x="263" y="700" width="5" height="1" fill="#fff"/><rect x="265" y="698" width="1" height="5" fill="#fff"/>
<rect x="274" y="686" width="5" height="1" fill="#fff"/><rect x="276" y="684" width="1" height="5" fill="#fff"/>
<rect x="287" y="673" width="5" height="1" fill="#fff"/><rect x="289" y="671" width="1" height="5" fill="#fff"/>
<rect x="62" y="702" width="563" height="1" fill="#ff00ff"/>
</g>
<rect x="56" y="50" width="611" height="1" fill="#fff"/>
<rect x="56" y="321" width="611" height="1" fill="#fff"/>
<rect x="56" y="449" width="611" height="1" fill="#fff"/>
<rect x="56" y="529" width="611" height="1" fill="#fff"/>
<rect x="56" y="586" width="611" height="1" fill="#fff"/>
<rect x="56" y="630" width="611" height="1" fill="#fff"/>
<rect x="56" y="665" width="611" height="1" fill="#fff"/>
<rect x="56" y="694" width="611" height="1" fill="#fff"/>
<rect x="56" y="719" width="611" height="1" fill="#fff"/>
<rect x="56" y="740" width="606" height="1" fill="#fff"/>
<rect x="61" y="50" width="1" height="700" fill="#fff"/>
<rect x="661" y="50" width="1" height="700" fill="#fff"/>
<rect x="61" y="749" width="601" height="1" fill="#fff"/>
<rect x="231" y="713" width="8" height="7" fill="#c0c000"/>
<text x="235" y="719.5" fill="#202000" font-size="8.5" text-anchor="middle">1</text>
<rect x="268" y="689" width="8" height="7" fill="#c0c000"/>
<text x="272" y="695.5" fill="#202000" font-size="8.5" text-anchor="middle">2</text>
<rect x="293" y="660" width="8" height="7" fill="#c0c000"/>
<text x="297" y="666.5" fill="#202000" font-size="8.5" text-anchor="middle">3</text>
<rect x="67.5" y="607.5" width="43" height="17" fill="#000" stroke="#ffff00" stroke-width="1"/>
<text transform="translate(72,621) scale(1,1.1)" fill="#ffff00" font-size="13">CAPE</text>
<rect x="67.5" y="636.5" width="57" height="17" fill="#000" stroke="#f08000" stroke-width="1"/>
<text transform="translate(72,650) scale(1,1.1)" fill="#f08000" font-size="13" textLength="48" lengthAdjust="spacingAndGlyphs">CINH * 5</text>
<rect x="625.5" y="693.5" width="30" height="17" fill="#000" stroke="#ff00ff" stroke-width="1.5"/>
<text transform="translate(630,707) scale(1,1.1)" fill="#ff00ff" font-size="13" textLength="22" lengthAdjust="spacingAndGlyphs">LCL</text>
<text transform="translate(53,55) scale(1,1.1)" fill="#fff" font-size="13" text-anchor="end">100</text>
<text transform="translate(53,326) scale(1,1.1)" fill="#fff" font-size="13" text-anchor="end">200</text>
<text transform="translate(53,454) scale(1,1.1)" fill="#fff" font-size="13" text-anchor="end">300</text>
<text transform="translate(53,534) scale(1,1.1)" fill="#fff" font-size="13" text-anchor="end">400</text>
<text transform="translate(53,591) scale(1,1.1)" fill="#fff" font-size="13" text-anchor="end">500</text>
<text transform="translate(53,635) scale(1,1.1)" fill="#fff" font-size="13" text-anchor="end">600</text>
<text transform="translate(53,670) scale(1,1.1)" fill="#fff" font-size="13" text-anchor="end">700</text>
<text transform="translate(53,699) scale(1,1.1)" fill="#fff" font-size="13" text-anchor="end">800</text>
<text transform="translate(53,724) scale(1,1.1)" fill="#fff" font-size="13" text-anchor="end">900</text>
<text transform="translate(53,745) scale(1,1.1)" fill="#fff" font-size="13" text-anchor="end">1000</text>
<text transform="translate(670,51) scale(1,1.1)" fill="#fff" font-size="13" textLength="44.5" lengthAdjust="spacingAndGlyphs">16421m</text>
<text transform="translate(670,322) scale(1,1.1)" fill="#fff" font-size="13" textLength="44.5" lengthAdjust="spacingAndGlyphs">12119m</text>
<text transform="translate(670,450) scale(1,1.1)" fill="#fff" font-size="13">9500m</text>
<text transform="translate(670,530) scale(1,1.1)" fill="#fff" font-size="13">7491m</text>
<text transform="translate(670,587) scale(1,1.1)" fill="#fff" font-size="13">5836m</text>
<text transform="translate(670,631) scale(1,1.1)" fill="#fff" font-size="13">4427m</text>
<text transform="translate(670,666) scale(1,1.1)" fill="#fff" font-size="13">3190m</text>
<text transform="translate(670,695) scale(1,1.1)" fill="#fff" font-size="13">2186m</text>
<text transform="translate(670,720) scale(1,1.1)" fill="#fff" font-size="13">1143m</text>
<rect x="61" y="750" width="1" height="6" fill="#fff"/>
<text x="59.5" y="768" fill="#fff" font-size="12.5" text-anchor="middle">-50</text>
<rect x="61" y="788" width="1" height="5" fill="#fff"/>
<text x="61.5" y="806" fill="#fff" font-size="12.5" text-anchor="middle">0</text>
<rect x="61" y="826" width="1" height="5" fill="#fff"/>
<text x="61.5" y="843" fill="#fff" font-size="12.5" text-anchor="middle">0</text>
<rect x="121" y="750" width="1" height="6" fill="#fff"/>
<text x="119.5" y="768" fill="#fff" font-size="12.5" text-anchor="middle">-40</text>
<rect x="121" y="788" width="1" height="5" fill="#fff"/>
<text x="121.5" y="806" fill="#fff" font-size="12.5" text-anchor="middle">10</text>
<rect x="121" y="826" width="1" height="5" fill="#fff"/>
<text x="121.5" y="843" fill="#fff" font-size="12.5" text-anchor="middle">300</text>
<rect x="181" y="750" width="1" height="6" fill="#fff"/>
<text x="179.5" y="768" fill="#fff" font-size="12.5" text-anchor="middle">-30</text>
<rect x="181" y="788" width="1" height="5" fill="#fff"/>
<text x="181.5" y="806" fill="#fff" font-size="12.5" text-anchor="middle">20</text>
<rect x="181" y="826" width="1" height="5" fill="#fff"/>
<text x="181.5" y="843" fill="#fff" font-size="12.5" text-anchor="middle">600</text>
<rect x="241" y="750" width="1" height="6" fill="#fff"/>
<text x="239.5" y="768" fill="#fff" font-size="12.5" text-anchor="middle">-20</text>
<rect x="241" y="788" width="1" height="5" fill="#fff"/>
<text x="241.5" y="806" fill="#fff" font-size="12.5" text-anchor="middle">30</text>
<rect x="241" y="826" width="1" height="5" fill="#fff"/>
<text x="241.5" y="843" fill="#fff" font-size="12.5" text-anchor="middle">900</text>
<rect x="301" y="750" width="1" height="6" fill="#fff"/>
<text x="299.5" y="768" fill="#fff" font-size="12.5" text-anchor="middle">-10</text>
<rect x="301" y="788" width="1" height="5" fill="#fff"/>
<text x="301.5" y="806" fill="#fff" font-size="12.5" text-anchor="middle">40</text>
<rect x="301" y="826" width="1" height="5" fill="#fff"/>
<text x="301.5" y="843" fill="#fff" font-size="12.5" text-anchor="middle">1200</text>
<rect x="361" y="750" width="1" height="6" fill="#fff"/>
<text x="361.5" y="768" fill="#fff" font-size="12.5" text-anchor="middle">0</text>
<rect x="361" y="788" width="1" height="5" fill="#fff"/>
<text x="361.5" y="806" fill="#fff" font-size="12.5" text-anchor="middle">50</text>
<rect x="361" y="826" width="1" height="5" fill="#fff"/>
<text x="361.5" y="843" fill="#fff" font-size="12.5" text-anchor="middle">1500</text>
<rect x="421" y="750" width="1" height="6" fill="#fff"/>
<text x="421.5" y="768" fill="#fff" font-size="12.5" text-anchor="middle">10</text>
<rect x="421" y="788" width="1" height="5" fill="#fff"/>
<text x="421.5" y="806" fill="#fff" font-size="12.5" text-anchor="middle">60</text>
<rect x="421" y="826" width="1" height="5" fill="#fff"/>
<text x="421.5" y="843" fill="#fff" font-size="12.5" text-anchor="middle">1800</text>
<rect x="481" y="750" width="1" height="6" fill="#fff"/>
<text x="481.5" y="768" fill="#fff" font-size="12.5" text-anchor="middle">20</text>
<rect x="481" y="788" width="1" height="5" fill="#fff"/>
<text x="481.5" y="806" fill="#fff" font-size="12.5" text-anchor="middle">70</text>
<rect x="481" y="826" width="1" height="5" fill="#fff"/>
<text x="481.5" y="843" fill="#fff" font-size="12.5" text-anchor="middle">2100</text>
<rect x="541" y="750" width="1" height="6" fill="#fff"/>
<text x="541.5" y="768" fill="#fff" font-size="12.5" text-anchor="middle">30</text>
<rect x="541" y="788" width="1" height="5" fill="#fff"/>
<text x="541.5" y="806" fill="#fff" font-size="12.5" text-anchor="middle">80</text>
<rect x="541" y="826" width="1" height="5" fill="#fff"/>
<text x="541.5" y="843" fill="#fff" font-size="12.5" text-anchor="middle">2400</text>
<rect x="601" y="750" width="1" height="6" fill="#fff"/>
<text x="601.5" y="768" fill="#fff" font-size="12.5" text-anchor="middle">40</text>
<rect x="601" y="788" width="1" height="5" fill="#fff"/>
<text x="601.5" y="806" fill="#fff" font-size="12.5" text-anchor="middle">90</text>
<rect x="601" y="826" width="1" height="5" fill="#fff"/>
<text x="601.5" y="843" fill="#fff" font-size="12.5" text-anchor="middle">2700</text>
<rect x="661" y="750" width="1" height="6" fill="#fff"/>
<text x="661.5" y="768" fill="#fff" font-size="12.5" text-anchor="middle">50</text>
<rect x="661" y="788" width="1" height="5" fill="#fff"/>
<text x="661.5" y="806" fill="#fff" font-size="12.5" text-anchor="middle">100</text>
<rect x="661" y="826" width="1" height="5" fill="#fff"/>
<text x="661.5" y="843" fill="#fff" font-size="12.5" text-anchor="middle">3000</text>
<rect x="61" y="863" width="1" height="5" fill="#fff"/>
<text x="59.5" y="880" fill="#fff" font-size="12.5" text-anchor="middle">-100</text>
<rect x="136" y="863" width="1" height="5" fill="#fff"/>
<text x="134.5" y="880" fill="#fff" font-size="12.5" text-anchor="middle">-50</text>
<rect x="211" y="863" width="1" height="5" fill="#fff"/>
<text x="211.5" y="880" fill="#fff" font-size="12.5" text-anchor="middle">0</text>
<rect x="286" y="863" width="1" height="5" fill="#fff"/>
<text x="286.5" y="880" fill="#fff" font-size="12.5" text-anchor="middle">50</text>
<rect x="361" y="863" width="1" height="5" fill="#fff"/>
<text x="361.5" y="880" fill="#fff" font-size="12.5" text-anchor="middle">100</text>
<rect x="436" y="863" width="1" height="5" fill="#fff"/>
<text x="436.5" y="880" fill="#fff" font-size="12.5" text-anchor="middle">150</text>
<rect x="511" y="863" width="1" height="5" fill="#fff"/>
<text x="511.5" y="880" fill="#fff" font-size="12.5" text-anchor="middle">200</text>
<rect x="586" y="863" width="1" height="5" fill="#fff"/>
<text x="586.5" y="880" fill="#fff" font-size="12.5" text-anchor="middle">250</text>
<rect x="661" y="863" width="1" height="5" fill="#fff"/>
<text x="661.5" y="880" fill="#fff" font-size="12.5" text-anchor="middle">300</text>
<text transform="translate(276,781) scale(1,1.1)" fill="#fff" font-size="13" textLength="171" lengthAdjust="spacingAndGlyphs">Temperature, Dewpoint  [ °C ]</text>
<text transform="translate(307,819) scale(1,1.1)" fill="#fff" font-size="13" textLength="106" lengthAdjust="spacingAndGlyphs">Windspeed  [ knt ]</text>
<text transform="translate(293,857) scale(1,1.1)" fill="#fff" font-size="13" textLength="136" lengthAdjust="spacingAndGlyphs">CAPE, CINH * 5  [ J/kg ]</text>
<text transform="translate(260,893) scale(1,1.1)" fill="#fff" font-size="13" textLength="203" lengthAdjust="spacingAndGlyphs">Storm Relative Helicity  [ m^2/s^2 ]</text>
<text x="62" y="29" fill="#fff" font-size="16" font-weight="bold" textLength="108" lengthAdjust="spacingAndGlyphs">Station: Basel</text>
<text x="196" y="29" fill="#fff" font-size="16" font-weight="bold" textLength="128" lengthAdjust="spacingAndGlyphs">Date: 24.05.2009</text>
<text x="345" y="29" fill="#fff" font-size="16" font-weight="bold" textLength="93" lengthAdjust="spacingAndGlyphs">Time: 1050Z</text>
<text x="761" y="32" fill="#00ff00" font-size="13" text-anchor="middle" font-weight="bold">OBS</text>
<text x="826" y="32" fill="#ff0080" font-size="13" text-anchor="middle" font-weight="bold">SR</text>
<rect x="761" y="40" width="1" height="731" fill="#00ff00"/>
<rect x="826" y="40" width="1" height="731" fill="#ff0080"/>
<g shape-rendering="crispEdges"><line x1="761.5" y1="147.0" x2="733.2" y2="139.7" stroke="#fff" stroke-width="1"/>
<line x1="761.5" y1="219.0" x2="732.5" y2="215.0" stroke="#fff" stroke-width="1"/>
<line x1="761.5" y1="274.7" x2="732.5" y2="279.1" stroke="#fff" stroke-width="1"/>
<line x1="761.5" y1="321.7" x2="732.5" y2="323.9" stroke="#fff" stroke-width="1"/>
<line x1="761.5" y1="361.0" x2="732.5" y2="364.1" stroke="#fff" stroke-width="1"/>
<line x1="761.5" y1="395.3" x2="733.7" y2="401.3" stroke="#fff" stroke-width="1"/>
<line x1="761.5" y1="424.0" x2="733.7" y2="430.0" stroke="#fff" stroke-width="1"/>
<line x1="761.5" y1="450.4" x2="733.7" y2="458.1" stroke="#fff" stroke-width="1"/>
<line x1="761.5" y1="473.2" x2="734.8" y2="483.1" stroke="#fff" stroke-width="1"/>
<line x1="761.5" y1="494.2" x2="732.5" y2="497.9" stroke="#fff" stroke-width="1"/>
<line x1="761.5" y1="513.4" x2="732.5" y2="510.8" stroke="#fff" stroke-width="1"/>
<line x1="761.5" y1="529.5" x2="732.5" y2="526.8" stroke="#fff" stroke-width="1"/>
<line x1="761.5" y1="545.8" x2="732.5" y2="548.1" stroke="#fff" stroke-width="1"/>
<line x1="761.5" y1="560.6" x2="732.5" y2="565.0" stroke="#fff" stroke-width="1"/>
<line x1="761.5" y1="575.0" x2="732.5" y2="572.0" stroke="#fff" stroke-width="1"/>
<line x1="761.5" y1="587.1" x2="732.5" y2="587.1" stroke="#fff" stroke-width="1"/>
<line x1="761.5" y1="598.9" x2="733.5" y2="605.1" stroke="#fff" stroke-width="1"/>
<line x1="761.5" y1="610.7" x2="733.5" y2="618.8" stroke="#fff" stroke-width="1"/>
<line x1="761.5" y1="621.0" x2="733.5" y2="628.1" stroke="#fff" stroke-width="1"/>
<line x1="761.5" y1="630.7" x2="733.5" y2="637.9" stroke="#fff" stroke-width="1"/>
<line x1="761.5" y1="641.1" x2="733.5" y2="648.8" stroke="#fff" stroke-width="1"/>
<line x1="761.5" y1="649.2" x2="733.5" y2="656.9" stroke="#fff" stroke-width="1"/>
<line x1="761.5" y1="657.9" x2="733.5" y2="665.0" stroke="#fff" stroke-width="1"/>
<line x1="761.5" y1="666.0" x2="733.5" y2="673.2" stroke="#fff" stroke-width="1"/>
<line x1="761.5" y1="674.1" x2="733.5" y2="681.1" stroke="#fff" stroke-width="1"/>
<line x1="761.5" y1="687.0" x2="733.5" y2="696.1" stroke="#fff" stroke-width="1"/>
<line x1="761.5" y1="699.8" x2="735.6" y2="713.1" stroke="#fff" stroke-width="1"/>
<line x1="761.5" y1="709.0" x2="735.6" y2="722.0" stroke="#fff" stroke-width="1"/>
<line x1="761.5" y1="716.0" x2="736.5" y2="728.7" stroke="#fff" stroke-width="1"/>
<line x1="761.5" y1="722.9" x2="743.5" y2="731.0" stroke="#fff" stroke-width="1"/>
<line x1="761.5" y1="729.9" x2="732.5" y2="730.7" stroke="#fff" stroke-width="1"/>
<line x1="761.5" y1="733.3" x2="733.6" y2="735.9" stroke="#fff" stroke-width="1"/>
<line x1="761.5" y1="733.3" x2="745.8" y2="712.5" stroke="#fff" stroke-width="1"/>
<line x1="760.2" y1="733.3" x2="755.6" y2="710.8" stroke="#fff" stroke-width="1"/>
<line x1="761.5" y1="732.2" x2="735.9" y2="721.7" stroke="#fff" stroke-width="1"/>
<line x1="826.5" y1="147.0" x2="855.4" y2="139.7" stroke="#fff" stroke-width="1"/>
<line x1="826.5" y1="219.0" x2="797.4" y2="224.0" stroke="#fff" stroke-width="1"/>
<line x1="826.5" y1="274.7" x2="801.8" y2="289.3" stroke="#fff" stroke-width="1"/>
<line x1="826.5" y1="321.7" x2="799.6" y2="333.1" stroke="#fff" stroke-width="1"/>
<line x1="826.5" y1="361.0" x2="800.7" y2="374.0" stroke="#fff" stroke-width="1"/>
<line x1="826.5" y1="395.3" x2="804.0" y2="412.3" stroke="#fff" stroke-width="1"/>
<line x1="826.5" y1="424.0" x2="804.0" y2="441.1" stroke="#fff" stroke-width="1"/>
<line x1="826.5" y1="450.4" x2="805.6" y2="470.5" stroke="#fff" stroke-width="1"/>
<line x1="826.5" y1="473.2" x2="812.9" y2="498.2" stroke="#fff" stroke-width="1"/>
<line x1="826.5" y1="494.2" x2="806.9" y2="515.2" stroke="#fff" stroke-width="1"/>
<line x1="826.5" y1="513.4" x2="802.9" y2="528.9" stroke="#fff" stroke-width="1"/>
<line x1="826.5" y1="530.1" x2="819.1" y2="558.1" stroke="#fff" stroke-width="1"/>
<line x1="826.5" y1="549.2" x2="831.3" y2="575.3" stroke="#fff" stroke-width="1"/>
<line x1="826.5" y1="575.8" x2="801.8" y2="589.0" stroke="#fff" stroke-width="1"/>
<line x1="826.5" y1="587.5" x2="805.1" y2="605.2" stroke="#fff" stroke-width="1"/>
<line x1="826.5" y1="599.3" x2="813.2" y2="623.7" stroke="#fff" stroke-width="1"/>
<line x1="826.5" y1="610.7" x2="809.5" y2="634.0" stroke="#fff" stroke-width="1"/>
<line x1="826.5" y1="621.0" x2="803.6" y2="639.1" stroke="#fff" stroke-width="1"/>
<line x1="826.5" y1="631.0" x2="803.6" y2="647.2" stroke="#fff" stroke-width="1"/>
<line x1="826.5" y1="641.3" x2="803.8" y2="659.0" stroke="#fff" stroke-width="1"/>
<line x1="826.5" y1="649.2" x2="804.8" y2="668.3" stroke="#fff" stroke-width="1"/>
<line x1="826.5" y1="657.9" x2="807.7" y2="679.3" stroke="#fff" stroke-width="1"/>
<line x1="826.5" y1="666.0" x2="809.8" y2="689.1" stroke="#fff" stroke-width="1"/>
<line x1="826.5" y1="674.1" x2="814.1" y2="700.1" stroke="#fff" stroke-width="1"/>
<line x1="826.5" y1="686.8" x2="827.2" y2="701.9" stroke="#fff" stroke-width="1"/>
<line x1="826.5" y1="709.3" x2="851.5" y2="725.4" stroke="#fff" stroke-width="1"/>
<line x1="826.5" y1="716.1" x2="853.5" y2="729.3" stroke="#fff" stroke-width="1"/>
<line x1="826.5" y1="723.0" x2="855.2" y2="732.0" stroke="#fff" stroke-width="1"/>
<line x1="826.5" y1="729.7" x2="855.5" y2="737.0" stroke="#fff" stroke-width="1"/>
<line x1="826.5" y1="732.9" x2="856.5" y2="740.8" stroke="#fff" stroke-width="1"/>
<line x1="826.5" y1="735.0" x2="856.0" y2="739.0" stroke="#fff" stroke-width="1"/>
<line x1="826.5" y1="737.3" x2="856.5" y2="743.2" stroke="#fff" stroke-width="1"/>
<line x1="826.5" y1="739.0" x2="854.5" y2="740.5" stroke="#fff" stroke-width="1"/>
<line x1="827.1" y1="701.4" x2="838.1" y2="725.7" stroke="#fff" stroke-width="1"/>
<rect x="826" y="686" width="1" height="15" fill="#fff"/></g>
<g>
<text transform="translate(894,40) scale(1,1.1)" fill="#fff" font-size="13" text-decoration="underline">Parameter</text>
<text transform="translate(1064,40) scale(1,1.1)" fill="#fff" font-size="13" text-decoration="underline">Value LCL</text>
<text transform="translate(1152,40) scale(1,1.1)" fill="#fff" font-size="13" text-decoration="underline">Value CCL</text>
<text transform="translate(1230,40) scale(1,1.1)" fill="#fff" font-size="13" text-decoration="underline">Unit</text>
<text transform="translate(894,62) scale(1,1.1)" fill="#fff" font-size="13">Convective Temperature:</text>
<text transform="translate(1123,62) scale(1,1.1)" fill="#ff0000" font-size="13" text-anchor="end">32.58</text>
<text transform="translate(1230,62) scale(1,1.1)" fill="#fff" font-size="13">[°C]</text>
<text transform="translate(894,79) scale(1,1.1)" fill="#fff" font-size="13">Snowfall Height:</text>
<text transform="translate(1123,79) scale(1,1.1)" fill="#fff" font-size="13" text-anchor="end">3393.01</text>
<text transform="translate(1230,79) scale(1,1.1)" fill="#fff" font-size="13">[m]</text>
<text transform="translate(894,104) scale(1,1.1)" fill="#fff" font-size="13" text-decoration="underline">Parcels: Using 50mB mean layer LCL + CCL</text>
<text transform="translate(894,124) scale(1,1.1)" fill="#fff" font-size="13">Lifted Index:</text>
<text transform="translate(1123,124) scale(1,1.1)" fill="#ff0000" font-size="13" text-anchor="end">-7.83</text>
<text transform="translate(1213,124) scale(1,1.1)" fill="#ff0000" font-size="13" text-anchor="end">-9.06</text>
<text transform="translate(1230,124) scale(1,1.1)" fill="#fff" font-size="13">[°C]</text>
<text transform="translate(894,141) scale(1,1.1)" fill="#fff" font-size="13">CAPE:</text>
<text transform="translate(1123,141) scale(1,1.1)" fill="#ff0000" font-size="13" text-anchor="end">2960.00</text>
<text transform="translate(1213,141) scale(1,1.1)" fill="#ff0000" font-size="13" text-anchor="end">3609.27</text>
<text transform="translate(1230,141) scale(1,1.1)" fill="#fff" font-size="13">[J/kg]</text>
<text transform="translate(894,158) scale(1,1.1)" fill="#fff" font-size="13">CINH:</text>
<text transform="translate(1123,158) scale(1,1.1)" fill="#ffff00" font-size="13" text-anchor="end">90.42</text>
<text transform="translate(1230,158) scale(1,1.1)" fill="#fff" font-size="13">[J/kg]</text>
<text transform="translate(894,175) scale(1,1.1)" fill="#fff" font-size="13">CAPE Virt.:</text>
<text transform="translate(1123,175) scale(1,1.1)" fill="#ff0000" font-size="13" text-anchor="end">3095.66</text>
<text transform="translate(1213,175) scale(1,1.1)" fill="#ff0000" font-size="13" text-anchor="end">3559.23</text>
<text transform="translate(1230,175) scale(1,1.1)" fill="#fff" font-size="13">[J/kg]</text>
<text transform="translate(894,192) scale(1,1.1)" fill="#fff" font-size="13">CINH Virt.:</text>
<text transform="translate(1123,192) scale(1,1.1)" fill="#ff0000" font-size="13" text-anchor="end">66.46</text>
<text transform="translate(1230,192) scale(1,1.1)" fill="#fff" font-size="13">[J/kg]</text>
<text transform="translate(894,209) scale(1,1.1)" fill="#fff" font-size="13">DCAPE (LFS = 575mB):</text>
<text transform="translate(1123,209) scale(1,1.1)" fill="#ff0000" font-size="13" text-anchor="end">642.36</text>
<text transform="translate(1230,209) scale(1,1.1)" fill="#fff" font-size="13">[J/kg]</text>
<text transform="translate(894,226) scale(1,1.1)" fill="#fff" font-size="13">850-600 Lapse Rate:</text>
<text transform="translate(1123,226) scale(1,1.1)" fill="#ff0000" font-size="13" text-anchor="end">23.58</text>
<text transform="translate(1230,226) scale(1,1.1)" fill="#fff" font-size="13">[°C]</text>
<text transform="translate(894,243) scale(1,1.1)" fill="#fff" font-size="13">Fawbush-Miller Hail Size:</text>
<text transform="translate(1123,243) scale(1,1.1)" fill="#ff0000" font-size="13" text-anchor="end">3.8 - 5.1</text>
<text transform="translate(1230,243) scale(1,1.1)" fill="#fff" font-size="13">[cm]</text>
<text transform="translate(894,260) scale(1,1.1)" fill="#fff" font-size="13">Sig. Hail Param. (SHIP):</text>
<text transform="translate(1123,260) scale(1,1.1)" fill="#ff0000" font-size="13" text-anchor="end">1.66</text>
<text transform="translate(1230,260) scale(1,1.1)" fill="#fff" font-size="13">[1]</text>
<text transform="translate(894,277) scale(1,1.1)" fill="#fff" font-size="13">Max. Hail Size (new, new2, old):</text>
<text transform="translate(1123,277) scale(1,1.1)" fill="#ff0000" font-size="13" text-anchor="end">7.66</text>
<text transform="translate(1125,277) scale(1,1.1)" fill="#fff" font-size="13">,</text>
<text transform="translate(1167,277) scale(1,1.1)" fill="#ff0000" font-size="13" text-anchor="end">13.65</text>
<text transform="translate(1169,277) scale(1,1.1)" fill="#fff" font-size="13">,</text>
<text transform="translate(1204,277) scale(1,1.1)" fill="#ff0000" font-size="13" text-anchor="end">5.64</text>
<text transform="translate(1230,277) scale(1,1.1)" fill="#fff" font-size="13">[cm]</text>
<text transform="translate(894,297) scale(1,1.1)" fill="#fff" font-size="13">LCL / CCL (AGL):</text>
<text transform="translate(1123,297) scale(1,1.1)" fill="#ffff00" font-size="13" text-anchor="end">1620.63</text>
<text transform="translate(1213,297) scale(1,1.1)" fill="#ffff00" font-size="13" text-anchor="end">1968.30</text>
<text transform="translate(1230,297) scale(1,1.1)" fill="#fff" font-size="13">[m]</text>
<text transform="translate(894,314) scale(1,1.1)" fill="#fff" font-size="13">Convective Height:</text>
<text transform="translate(1123,314) scale(1,1.1)" fill="#ff0000" font-size="13" text-anchor="end">11.07</text>
<text transform="translate(1213,314) scale(1,1.1)" fill="#ff0000" font-size="13" text-anchor="end">10.88</text>
<text transform="translate(1230,314) scale(1,1.1)" fill="#fff" font-size="13">[km]</text>
<text transform="translate(894,339) scale(1,1.1)" fill="#fff" font-size="13" text-decoration="underline">Convective Indices</text>
<text transform="translate(894,359) scale(1,1.1)" fill="#fff" font-size="13">Showalter Index:</text>
<text transform="translate(1123,359) scale(1,1.1)" fill="#ff0000" font-size="13" text-anchor="end">-6.43</text>
<text transform="translate(1230,359) scale(1,1.1)" fill="#fff" font-size="13">[°C]</text>
<text transform="translate(894,376) scale(1,1.1)" fill="#fff" font-size="13">Modified Thompson Index:</text>
<text transform="translate(1123,376) scale(1,1.1)" fill="#ff0000" font-size="13" text-anchor="end">55.17</text>
<text transform="translate(1230,376) scale(1,1.1)" fill="#fff" font-size="13">[°C]</text>
<text transform="translate(894,393) scale(1,1.1)" fill="#fff" font-size="13">Total Totals Index:</text>
<text transform="translate(1123,393) scale(1,1.1)" fill="#ff0000" font-size="13" text-anchor="end">59.14</text>
<text transform="translate(1230,393) scale(1,1.1)" fill="#fff" font-size="13">[°C]</text>
<text transform="translate(894,410) scale(1,1.1)" fill="#fff" font-size="13">KO Index:</text>
<text transform="translate(1123,410) scale(1,1.1)" fill="#ff0000" font-size="13" text-anchor="end">-22.68</text>
<text transform="translate(1230,410) scale(1,1.1)" fill="#fff" font-size="13">[1]</text>
<text transform="translate(894,427) scale(1,1.1)" fill="#fff" font-size="13">Craven SigSvr / 1000:</text>
<text transform="translate(1123,427) scale(1,1.1)" fill="#ff0000" font-size="13" text-anchor="end">26.76</text>
<text transform="translate(1230,427) scale(1,1.1)" fill="#fff" font-size="13">[m^3/s^3]</text>
<text transform="translate(894,444) scale(1,1.1)" fill="#fff" font-size="13">SCP RM (new, old):</text>
<text transform="translate(1123,444) scale(1,1.1)" fill="#00ff00" font-size="13" text-anchor="end">0.00</text>
<text transform="translate(1125,444) scale(1,1.1)" fill="#fff" font-size="13">,</text>
<text transform="translate(1136,444) scale(1,1.1)" fill="#ff0000" font-size="13">1.39</text>
<text transform="translate(1230,444) scale(1,1.1)" fill="#fff" font-size="13">[1]</text>
<text transform="translate(894,461) scale(1,1.1)" fill="#fff" font-size="13">SCP LM (new, old):</text>
<text transform="translate(1123,461) scale(1,1.1)" fill="#00ff00" font-size="13" text-anchor="end">0.00</text>
<text transform="translate(1125,461) scale(1,1.1)" fill="#fff" font-size="13">,</text>
<text transform="translate(1136,461) scale(1,1.1)" fill="#ffff00" font-size="13">0.74</text>
<text transform="translate(1230,461) scale(1,1.1)" fill="#fff" font-size="13">[1]</text>
<text transform="translate(894,478) scale(1,1.1)" fill="#fff" font-size="13">STP (new, old):</text>
<text transform="translate(1123,478) scale(1,1.1)" fill="#ff0000" font-size="13" text-anchor="end">0.14</text>
<text transform="translate(1125,478) scale(1,1.1)" fill="#fff" font-size="13">,</text>
<text transform="translate(1136,478) scale(1,1.1)" fill="#00ff00" font-size="13">0.05</text>
<text transform="translate(1230,478) scale(1,1.1)" fill="#fff" font-size="13">[1]</text>
<text transform="translate(894,495) scale(1,1.1)" fill="#fff" font-size="13">SB STP (fix):</text>
<text transform="translate(1123,495) scale(1,1.1)" fill="#00ff00" font-size="13" text-anchor="end">0.06</text>
<text transform="translate(1230,495) scale(1,1.1)" fill="#fff" font-size="13">[1]</text>
<text transform="translate(894,512) scale(1,1.1)" fill="#fff" font-size="13">Derecho Comp Param:</text>
<text transform="translate(1123,512) scale(1,1.1)" fill="#ff0000" font-size="13" text-anchor="end">0.94</text>
<text transform="translate(1230,512) scale(1,1.1)" fill="#fff" font-size="13">[1]</text>
<text transform="translate(894,529) scale(1,1.1)" fill="#fff" font-size="13">MCS 18m/s (MMP, MSP):</text>
<text transform="translate(1123,529) scale(1,1.1)" fill="#00ff00" font-size="13" text-anchor="end">71.83</text>
<text transform="translate(1125,529) scale(1,1.1)" fill="#fff" font-size="13">,</text>
<text transform="translate(1136,529) scale(1,1.1)" fill="#fff" font-size="13">---</text>
<text transform="translate(1230,529) scale(1,1.1)" fill="#fff" font-size="13">[%]</text>
<text transform="translate(894,546) scale(1,1.1)" fill="#fff" font-size="13">Exp. Supercell Index CH:</text>
<text transform="translate(1123,546) scale(1,1.1)" fill="#ff0000" font-size="13" text-anchor="end">5.43</text>
<text transform="translate(1230,546) scale(1,1.1)" fill="#fff" font-size="13">[1]</text>
<text transform="translate(894,563) scale(1,1.1)" fill="#fff" font-size="13">SWISS 12 Index:</text>
<text transform="translate(1123,563) scale(1,1.1)" fill="#ff0000" font-size="13" text-anchor="end">-12.30</text>
<text transform="translate(1230,563) scale(1,1.1)" fill="#fff" font-size="13">[1]</text>
<text transform="translate(894,587) scale(1,1.1)" fill="#fff" font-size="13" text-decoration="underline">Wind Parameters</text>
<text transform="translate(894,607) scale(1,1.1)" fill="#fff" font-size="13">Storm Direction:</text>
<text transform="translate(1123,607) scale(1,1.1)" fill="#fff" font-size="13" text-anchor="end">280.62</text>
<text transform="translate(1230,607) scale(1,1.1)" fill="#fff" font-size="13">[°]</text>
<text transform="translate(894,625) scale(1,1.1)" fill="#fff" font-size="13">Storm Motion:</text>
<text transform="translate(1123,625) scale(1,1.1)" fill="#ffff00" font-size="13" text-anchor="end">15.79</text>
<text transform="translate(1230,625) scale(1,1.1)" fill="#fff" font-size="13">[knt]</text>
<text transform="translate(894,644) scale(1,1.1)" fill="#fff" font-size="13">SR Wind Sfc-2km:</text>
<text transform="translate(1123,644) scale(1,1.1)" fill="#ffff00" font-size="13" text-anchor="end">11.62</text>
<text transform="translate(1230,644) scale(1,1.1)" fill="#fff" font-size="13">[knt]</text>
<text transform="translate(894,661) scale(1,1.1)" fill="#fff" font-size="13">SR Wind 4km-6km:</text>
<text transform="translate(1123,661) scale(1,1.1)" fill="#00ff00" font-size="13" text-anchor="end">10.75</text>
<text transform="translate(1230,661) scale(1,1.1)" fill="#fff" font-size="13">[knt]</text>
<text transform="translate(894,678) scale(1,1.1)" fill="#fff" font-size="13">SR Wind 9km-11km:</text>
<text transform="translate(1123,678) scale(1,1.1)" fill="#ff0000" font-size="13" text-anchor="end">14.02</text>
<text transform="translate(1230,678) scale(1,1.1)" fill="#fff" font-size="13">[knt] HP</text>
<text transform="translate(894,698) scale(1,1.1)" fill="#fff" font-size="13">Effective Shear 6000:</text>
<text transform="translate(1123,698) scale(1,1.1)" fill="#00ff00" font-size="13" text-anchor="end">17.56</text>
<text transform="translate(1230,698) scale(1,1.1)" fill="#fff" font-size="13">[knt]</text>
<text transform="translate(894,718) scale(1,1.1)" fill="#fff" font-size="13">Bulk Richardson Number:</text>
<text transform="translate(1123,718) scale(1,1.1)" fill="#ffff00" font-size="13" text-anchor="end">96.11</text>
<text transform="translate(1213,718) scale(1,1.1)" fill="#ffff00" font-size="13" text-anchor="end">117.19</text>
<text transform="translate(1230,718) scale(1,1.1)" fill="#fff" font-size="13">[1]</text>
<text transform="translate(894,739) scale(1,1.1)" fill="#fff" font-size="13">3km Effective SRH:</text>
<text transform="translate(1123,739) scale(1,1.1)" fill="#00ff00" font-size="13" text-anchor="end">56.50</text>
<text transform="translate(1230,739) scale(1,1.1)" fill="#fff" font-size="13">[m^2/s^2]</text>
<text transform="translate(894,756) scale(1,1.1)" fill="#fff" font-size="13">Max 3km SRH (Sfc-2km):</text>
<text transform="translate(1123,756) scale(1,1.1)" fill="#00ff00" font-size="13" text-anchor="end">71.29</text>
<text transform="translate(1230,756) scale(1,1.1)" fill="#fff" font-size="13">[m^2/s^2]</text>
<text transform="translate(894,773) scale(1,1.1)" fill="#fff" font-size="13">Max 3km SRH Level AGL:</text>
<text transform="translate(1123,773) scale(1,1.1)" fill="#00ff00" font-size="13" text-anchor="end">1040.00</text>
<text transform="translate(1230,773) scale(1,1.1)" fill="#fff" font-size="13">[m]</text>
<text transform="translate(894,793) scale(1,1.1)" fill="#fff" font-size="13">3km Energy Helicity Index:</text>
<text transform="translate(1123,793) scale(1,1.1)" fill="#00ff00" font-size="13" text-anchor="end">1.05</text>
<text transform="translate(1213,793) scale(1,1.1)" fill="#00ff00" font-size="13" text-anchor="end">1.27</text>
<text transform="translate(1230,793) scale(1,1.1)" fill="#fff" font-size="13">[1]</text>
<text transform="translate(894,810) scale(1,1.1)" fill="#fff" font-size="13">3km Vorticity Gen. Pot.:</text>
<text transform="translate(1123,810) scale(1,1.1)" fill="#ff0000" font-size="13" text-anchor="end">0.21</text>
<text transform="translate(1213,810) scale(1,1.1)" fill="#ff0000" font-size="13" text-anchor="end">0.23</text>
<text transform="translate(1230,810) scale(1,1.1)" fill="#fff" font-size="13">[m/s^2]</text>
</g>
<rect x="729" y="827" width="15" height="8" fill="#ff0000"/>
<text transform="translate(753,836) scale(1,1.1)" fill="#ff0000" font-size="13">Temperature Profile</text>
<rect x="729" y="847" width="15" height="8" fill="#00ffff"/>
<text transform="translate(753,856) scale(1,1.1)" fill="#00ffff" font-size="13">Dewpoint Profile</text>
<rect x="729" y="867" width="15" height="8" fill="#00ff00"/>
<text transform="translate(753,876) scale(1,1.1)" fill="#00ff00" font-size="13">OBS Windspeed Profile</text>
<rect x="729" y="887" width="15" height="8" fill="#ff0080"/>
<text transform="translate(753,896) scale(1,1.1)" fill="#ff0080" font-size="13">SR Windspeed Profile</text>
<rect x="729" y="907" width="15" height="8" fill="#c0c000"/>
<text transform="translate(753,916) scale(1,1.1)" fill="#c0c000" font-size="13">Sfc-3km Storm Relative Helicity Profile</text>
<rect x="729" y="927" width="15" height="8" fill="#403c00"/>
<text transform="translate(753,936) scale(1,1.1)" fill="#403c00" font-size="13">Effective Layer (CAPE &gt;= 100 J/kg)</text>
<rect x="1079" y="827" width="15" height="8" fill="#00ff00"/>
<text transform="translate(1103,836) scale(1,1.1)" fill="#00ff00" font-size="13">No / Non Severe Thunderstorms</text>
<rect x="1079" y="847" width="15" height="8" fill="#ffff00"/>
<text transform="translate(1103,856) scale(1,1.1)" fill="#ffff00" font-size="13">Scattered / Moderate Thunderstorms</text>
<rect x="1079" y="867" width="15" height="8" fill="#ff0000"/>
<text transform="translate(1103,876) scale(1,1.1)" fill="#ff0000" font-size="13">Widespread / Severe Thunderstorms</text>
</svg></body></html>
